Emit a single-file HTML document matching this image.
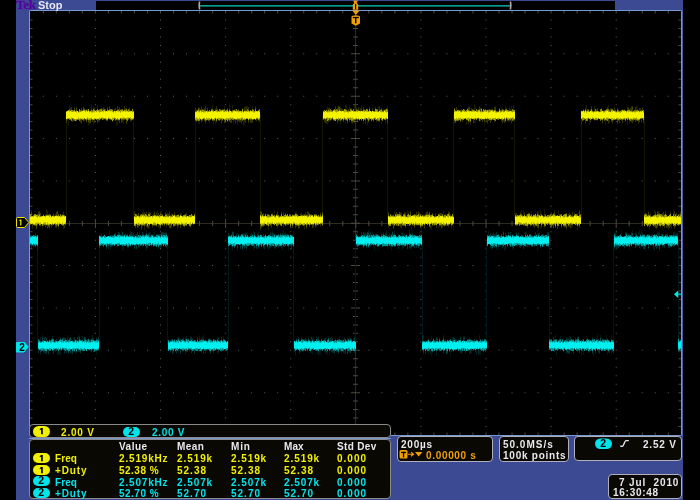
<!DOCTYPE html>
<html><head><meta charset="utf-8"><style>
html,body{margin:0;padding:0;background:#000;width:700px;height:500px;overflow:hidden;}
body{position:relative;font-family:"Liberation Sans",sans-serif;}
.a{position:absolute;}
.t{position:absolute;white-space:pre;line-height:8px;height:8px;font-size:10px;font-weight:bold;will-change:transform;}
.box{position:absolute;box-sizing:border-box;background:#0a0803;border:1px solid #8a8a8a;border-radius:4px;}
.pill{position:absolute;box-sizing:border-box;border-radius:6px;color:#000;font-weight:bold;text-align:center;font-size:10px;}
</style></head><body>
<div class="a" style="left:16px;top:0;width:667px;height:500px;background:#3c4a94"></div>
<div class="a" style="left:96px;top:1px;width:519px;height:9px;background:#000"></div>
<div class="a" style="left:200px;top:5px;width:310px;height:1px;background:#0c9c8e"></div><div class="a" style="left:200px;top:6px;width:310px;height:1px;background:#066a60"></div>
<div class="a" style="left:29px;top:10px;width:653px;height:426px;background:#7898d4;border-radius:2px"></div><div class="a" style="left:682px;top:10px;width:1px;height:426px;background:#4a5ab0"></div>
<svg width="700" height="500" style="position:absolute;left:0;top:0"><defs><filter id="vb" x="-1%" y="-20%" width="102%" height="140%"><feGaussianBlur stdDeviation="0.35 0.7"/></filter></defs><rect x="30" y="11" width="651" height="424" fill="#000"/><path d="M94.90 19.47h1v1h-1zM94.90 27.94h1v1h-1zM94.90 36.41h1v1h-1zM94.90 44.88h1v1h-1zM94.90 53.35h1v1h-1zM94.90 61.82h1v1h-1zM94.90 70.29h1v1h-1zM94.90 78.76h1v1h-1zM94.90 87.23h1v1h-1zM94.90 95.70h1v1h-1zM94.90 104.17h1v1h-1zM94.90 112.64h1v1h-1zM94.90 121.11h1v1h-1zM94.90 129.58h1v1h-1zM94.90 138.05h1v1h-1zM94.90 146.52h1v1h-1zM94.90 154.99h1v1h-1zM94.90 163.46h1v1h-1zM94.90 171.93h1v1h-1zM94.90 180.40h1v1h-1zM94.90 188.87h1v1h-1zM94.90 197.34h1v1h-1zM94.90 205.81h1v1h-1zM94.90 214.28h1v1h-1zM94.90 222.75h1v1h-1zM94.90 231.22h1v1h-1zM94.90 239.69h1v1h-1zM94.90 248.16h1v1h-1zM94.90 256.63h1v1h-1zM94.90 265.10h1v1h-1zM94.90 273.57h1v1h-1zM94.90 282.04h1v1h-1zM94.90 290.51h1v1h-1zM94.90 298.98h1v1h-1zM94.90 307.45h1v1h-1zM94.90 315.92h1v1h-1zM94.90 324.39h1v1h-1zM94.90 332.86h1v1h-1zM94.90 341.33h1v1h-1zM94.90 349.80h1v1h-1zM94.90 358.27h1v1h-1zM94.90 366.74h1v1h-1zM94.90 375.21h1v1h-1zM94.90 383.68h1v1h-1zM94.90 392.15h1v1h-1zM94.90 400.62h1v1h-1zM94.90 409.09h1v1h-1zM94.90 417.56h1v1h-1zM94.90 426.03h1v1h-1zM160.00 19.47h1v1h-1zM160.00 27.94h1v1h-1zM160.00 36.41h1v1h-1zM160.00 44.88h1v1h-1zM160.00 53.35h1v1h-1zM160.00 61.82h1v1h-1zM160.00 70.29h1v1h-1zM160.00 78.76h1v1h-1zM160.00 87.23h1v1h-1zM160.00 95.70h1v1h-1zM160.00 104.17h1v1h-1zM160.00 112.64h1v1h-1zM160.00 121.11h1v1h-1zM160.00 129.58h1v1h-1zM160.00 138.05h1v1h-1zM160.00 146.52h1v1h-1zM160.00 154.99h1v1h-1zM160.00 163.46h1v1h-1zM160.00 171.93h1v1h-1zM160.00 180.40h1v1h-1zM160.00 188.87h1v1h-1zM160.00 197.34h1v1h-1zM160.00 205.81h1v1h-1zM160.00 214.28h1v1h-1zM160.00 222.75h1v1h-1zM160.00 231.22h1v1h-1zM160.00 239.69h1v1h-1zM160.00 248.16h1v1h-1zM160.00 256.63h1v1h-1zM160.00 265.10h1v1h-1zM160.00 273.57h1v1h-1zM160.00 282.04h1v1h-1zM160.00 290.51h1v1h-1zM160.00 298.98h1v1h-1zM160.00 307.45h1v1h-1zM160.00 315.92h1v1h-1zM160.00 324.39h1v1h-1zM160.00 332.86h1v1h-1zM160.00 341.33h1v1h-1zM160.00 349.80h1v1h-1zM160.00 358.27h1v1h-1zM160.00 366.74h1v1h-1zM160.00 375.21h1v1h-1zM160.00 383.68h1v1h-1zM160.00 392.15h1v1h-1zM160.00 400.62h1v1h-1zM160.00 409.09h1v1h-1zM160.00 417.56h1v1h-1zM160.00 426.03h1v1h-1zM225.10 19.47h1v1h-1zM225.10 27.94h1v1h-1zM225.10 36.41h1v1h-1zM225.10 44.88h1v1h-1zM225.10 53.35h1v1h-1zM225.10 61.82h1v1h-1zM225.10 70.29h1v1h-1zM225.10 78.76h1v1h-1zM225.10 87.23h1v1h-1zM225.10 95.70h1v1h-1zM225.10 104.17h1v1h-1zM225.10 112.64h1v1h-1zM225.10 121.11h1v1h-1zM225.10 129.58h1v1h-1zM225.10 138.05h1v1h-1zM225.10 146.52h1v1h-1zM225.10 154.99h1v1h-1zM225.10 163.46h1v1h-1zM225.10 171.93h1v1h-1zM225.10 180.40h1v1h-1zM225.10 188.87h1v1h-1zM225.10 197.34h1v1h-1zM225.10 205.81h1v1h-1zM225.10 214.28h1v1h-1zM225.10 222.75h1v1h-1zM225.10 231.22h1v1h-1zM225.10 239.69h1v1h-1zM225.10 248.16h1v1h-1zM225.10 256.63h1v1h-1zM225.10 265.10h1v1h-1zM225.10 273.57h1v1h-1zM225.10 282.04h1v1h-1zM225.10 290.51h1v1h-1zM225.10 298.98h1v1h-1zM225.10 307.45h1v1h-1zM225.10 315.92h1v1h-1zM225.10 324.39h1v1h-1zM225.10 332.86h1v1h-1zM225.10 341.33h1v1h-1zM225.10 349.80h1v1h-1zM225.10 358.27h1v1h-1zM225.10 366.74h1v1h-1zM225.10 375.21h1v1h-1zM225.10 383.68h1v1h-1zM225.10 392.15h1v1h-1zM225.10 400.62h1v1h-1zM225.10 409.09h1v1h-1zM225.10 417.56h1v1h-1zM225.10 426.03h1v1h-1zM290.20 19.47h1v1h-1zM290.20 27.94h1v1h-1zM290.20 36.41h1v1h-1zM290.20 44.88h1v1h-1zM290.20 53.35h1v1h-1zM290.20 61.82h1v1h-1zM290.20 70.29h1v1h-1zM290.20 78.76h1v1h-1zM290.20 87.23h1v1h-1zM290.20 95.70h1v1h-1zM290.20 104.17h1v1h-1zM290.20 112.64h1v1h-1zM290.20 121.11h1v1h-1zM290.20 129.58h1v1h-1zM290.20 138.05h1v1h-1zM290.20 146.52h1v1h-1zM290.20 154.99h1v1h-1zM290.20 163.46h1v1h-1zM290.20 171.93h1v1h-1zM290.20 180.40h1v1h-1zM290.20 188.87h1v1h-1zM290.20 197.34h1v1h-1zM290.20 205.81h1v1h-1zM290.20 214.28h1v1h-1zM290.20 222.75h1v1h-1zM290.20 231.22h1v1h-1zM290.20 239.69h1v1h-1zM290.20 248.16h1v1h-1zM290.20 256.63h1v1h-1zM290.20 265.10h1v1h-1zM290.20 273.57h1v1h-1zM290.20 282.04h1v1h-1zM290.20 290.51h1v1h-1zM290.20 298.98h1v1h-1zM290.20 307.45h1v1h-1zM290.20 315.92h1v1h-1zM290.20 324.39h1v1h-1zM290.20 332.86h1v1h-1zM290.20 341.33h1v1h-1zM290.20 349.80h1v1h-1zM290.20 358.27h1v1h-1zM290.20 366.74h1v1h-1zM290.20 375.21h1v1h-1zM290.20 383.68h1v1h-1zM290.20 392.15h1v1h-1zM290.20 400.62h1v1h-1zM290.20 409.09h1v1h-1zM290.20 417.56h1v1h-1zM290.20 426.03h1v1h-1zM420.40 19.47h1v1h-1zM420.40 27.94h1v1h-1zM420.40 36.41h1v1h-1zM420.40 44.88h1v1h-1zM420.40 53.35h1v1h-1zM420.40 61.82h1v1h-1zM420.40 70.29h1v1h-1zM420.40 78.76h1v1h-1zM420.40 87.23h1v1h-1zM420.40 95.70h1v1h-1zM420.40 104.17h1v1h-1zM420.40 112.64h1v1h-1zM420.40 121.11h1v1h-1zM420.40 129.58h1v1h-1zM420.40 138.05h1v1h-1zM420.40 146.52h1v1h-1zM420.40 154.99h1v1h-1zM420.40 163.46h1v1h-1zM420.40 171.93h1v1h-1zM420.40 180.40h1v1h-1zM420.40 188.87h1v1h-1zM420.40 197.34h1v1h-1zM420.40 205.81h1v1h-1zM420.40 214.28h1v1h-1zM420.40 222.75h1v1h-1zM420.40 231.22h1v1h-1zM420.40 239.69h1v1h-1zM420.40 248.16h1v1h-1zM420.40 256.63h1v1h-1zM420.40 265.10h1v1h-1zM420.40 273.57h1v1h-1zM420.40 282.04h1v1h-1zM420.40 290.51h1v1h-1zM420.40 298.98h1v1h-1zM420.40 307.45h1v1h-1zM420.40 315.92h1v1h-1zM420.40 324.39h1v1h-1zM420.40 332.86h1v1h-1zM420.40 341.33h1v1h-1zM420.40 349.80h1v1h-1zM420.40 358.27h1v1h-1zM420.40 366.74h1v1h-1zM420.40 375.21h1v1h-1zM420.40 383.68h1v1h-1zM420.40 392.15h1v1h-1zM420.40 400.62h1v1h-1zM420.40 409.09h1v1h-1zM420.40 417.56h1v1h-1zM420.40 426.03h1v1h-1zM485.50 19.47h1v1h-1zM485.50 27.94h1v1h-1zM485.50 36.41h1v1h-1zM485.50 44.88h1v1h-1zM485.50 53.35h1v1h-1zM485.50 61.82h1v1h-1zM485.50 70.29h1v1h-1zM485.50 78.76h1v1h-1zM485.50 87.23h1v1h-1zM485.50 95.70h1v1h-1zM485.50 104.17h1v1h-1zM485.50 112.64h1v1h-1zM485.50 121.11h1v1h-1zM485.50 129.58h1v1h-1zM485.50 138.05h1v1h-1zM485.50 146.52h1v1h-1zM485.50 154.99h1v1h-1zM485.50 163.46h1v1h-1zM485.50 171.93h1v1h-1zM485.50 180.40h1v1h-1zM485.50 188.87h1v1h-1zM485.50 197.34h1v1h-1zM485.50 205.81h1v1h-1zM485.50 214.28h1v1h-1zM485.50 222.75h1v1h-1zM485.50 231.22h1v1h-1zM485.50 239.69h1v1h-1zM485.50 248.16h1v1h-1zM485.50 256.63h1v1h-1zM485.50 265.10h1v1h-1zM485.50 273.57h1v1h-1zM485.50 282.04h1v1h-1zM485.50 290.51h1v1h-1zM485.50 298.98h1v1h-1zM485.50 307.45h1v1h-1zM485.50 315.92h1v1h-1zM485.50 324.39h1v1h-1zM485.50 332.86h1v1h-1zM485.50 341.33h1v1h-1zM485.50 349.80h1v1h-1zM485.50 358.27h1v1h-1zM485.50 366.74h1v1h-1zM485.50 375.21h1v1h-1zM485.50 383.68h1v1h-1zM485.50 392.15h1v1h-1zM485.50 400.62h1v1h-1zM485.50 409.09h1v1h-1zM485.50 417.56h1v1h-1zM485.50 426.03h1v1h-1zM550.60 19.47h1v1h-1zM550.60 27.94h1v1h-1zM550.60 36.41h1v1h-1zM550.60 44.88h1v1h-1zM550.60 53.35h1v1h-1zM550.60 61.82h1v1h-1zM550.60 70.29h1v1h-1zM550.60 78.76h1v1h-1zM550.60 87.23h1v1h-1zM550.60 95.70h1v1h-1zM550.60 104.17h1v1h-1zM550.60 112.64h1v1h-1zM550.60 121.11h1v1h-1zM550.60 129.58h1v1h-1zM550.60 138.05h1v1h-1zM550.60 146.52h1v1h-1zM550.60 154.99h1v1h-1zM550.60 163.46h1v1h-1zM550.60 171.93h1v1h-1zM550.60 180.40h1v1h-1zM550.60 188.87h1v1h-1zM550.60 197.34h1v1h-1zM550.60 205.81h1v1h-1zM550.60 214.28h1v1h-1zM550.60 222.75h1v1h-1zM550.60 231.22h1v1h-1zM550.60 239.69h1v1h-1zM550.60 248.16h1v1h-1zM550.60 256.63h1v1h-1zM550.60 265.10h1v1h-1zM550.60 273.57h1v1h-1zM550.60 282.04h1v1h-1zM550.60 290.51h1v1h-1zM550.60 298.98h1v1h-1zM550.60 307.45h1v1h-1zM550.60 315.92h1v1h-1zM550.60 324.39h1v1h-1zM550.60 332.86h1v1h-1zM550.60 341.33h1v1h-1zM550.60 349.80h1v1h-1zM550.60 358.27h1v1h-1zM550.60 366.74h1v1h-1zM550.60 375.21h1v1h-1zM550.60 383.68h1v1h-1zM550.60 392.15h1v1h-1zM550.60 400.62h1v1h-1zM550.60 409.09h1v1h-1zM550.60 417.56h1v1h-1zM550.60 426.03h1v1h-1zM615.70 19.47h1v1h-1zM615.70 27.94h1v1h-1zM615.70 36.41h1v1h-1zM615.70 44.88h1v1h-1zM615.70 53.35h1v1h-1zM615.70 61.82h1v1h-1zM615.70 70.29h1v1h-1zM615.70 78.76h1v1h-1zM615.70 87.23h1v1h-1zM615.70 95.70h1v1h-1zM615.70 104.17h1v1h-1zM615.70 112.64h1v1h-1zM615.70 121.11h1v1h-1zM615.70 129.58h1v1h-1zM615.70 138.05h1v1h-1zM615.70 146.52h1v1h-1zM615.70 154.99h1v1h-1zM615.70 163.46h1v1h-1zM615.70 171.93h1v1h-1zM615.70 180.40h1v1h-1zM615.70 188.87h1v1h-1zM615.70 197.34h1v1h-1zM615.70 205.81h1v1h-1zM615.70 214.28h1v1h-1zM615.70 222.75h1v1h-1zM615.70 231.22h1v1h-1zM615.70 239.69h1v1h-1zM615.70 248.16h1v1h-1zM615.70 256.63h1v1h-1zM615.70 265.10h1v1h-1zM615.70 273.57h1v1h-1zM615.70 282.04h1v1h-1zM615.70 290.51h1v1h-1zM615.70 298.98h1v1h-1zM615.70 307.45h1v1h-1zM615.70 315.92h1v1h-1zM615.70 324.39h1v1h-1zM615.70 332.86h1v1h-1zM615.70 341.33h1v1h-1zM615.70 349.80h1v1h-1zM615.70 358.27h1v1h-1zM615.70 366.74h1v1h-1zM615.70 375.21h1v1h-1zM615.70 383.68h1v1h-1zM615.70 392.15h1v1h-1zM615.70 400.62h1v1h-1zM615.70 409.09h1v1h-1zM615.70 417.56h1v1h-1zM615.70 426.03h1v1h-1zM42.82 53.35h1v1h-1zM55.84 53.35h1v1h-1zM68.86 53.35h1v1h-1zM81.88 53.35h1v1h-1zM107.92 53.35h1v1h-1zM120.94 53.35h1v1h-1zM133.96 53.35h1v1h-1zM146.98 53.35h1v1h-1zM173.02 53.35h1v1h-1zM186.04 53.35h1v1h-1zM199.06 53.35h1v1h-1zM212.08 53.35h1v1h-1zM238.12 53.35h1v1h-1zM251.14 53.35h1v1h-1zM264.16 53.35h1v1h-1zM277.18 53.35h1v1h-1zM303.22 53.35h1v1h-1zM316.24 53.35h1v1h-1zM329.26 53.35h1v1h-1zM342.28 53.35h1v1h-1zM368.32 53.35h1v1h-1zM381.34 53.35h1v1h-1zM394.36 53.35h1v1h-1zM407.38 53.35h1v1h-1zM433.42 53.35h1v1h-1zM446.44 53.35h1v1h-1zM459.46 53.35h1v1h-1zM472.48 53.35h1v1h-1zM498.52 53.35h1v1h-1zM511.54 53.35h1v1h-1zM524.56 53.35h1v1h-1zM537.58 53.35h1v1h-1zM563.62 53.35h1v1h-1zM576.64 53.35h1v1h-1zM589.66 53.35h1v1h-1zM602.68 53.35h1v1h-1zM628.72 53.35h1v1h-1zM641.74 53.35h1v1h-1zM654.76 53.35h1v1h-1zM667.78 53.35h1v1h-1zM42.82 95.70h1v1h-1zM55.84 95.70h1v1h-1zM68.86 95.70h1v1h-1zM81.88 95.70h1v1h-1zM107.92 95.70h1v1h-1zM120.94 95.70h1v1h-1zM133.96 95.70h1v1h-1zM146.98 95.70h1v1h-1zM173.02 95.70h1v1h-1zM186.04 95.70h1v1h-1zM199.06 95.70h1v1h-1zM212.08 95.70h1v1h-1zM238.12 95.70h1v1h-1zM251.14 95.70h1v1h-1zM264.16 95.70h1v1h-1zM277.18 95.70h1v1h-1zM303.22 95.70h1v1h-1zM316.24 95.70h1v1h-1zM329.26 95.70h1v1h-1zM342.28 95.70h1v1h-1zM368.32 95.70h1v1h-1zM381.34 95.70h1v1h-1zM394.36 95.70h1v1h-1zM407.38 95.70h1v1h-1zM433.42 95.70h1v1h-1zM446.44 95.70h1v1h-1zM459.46 95.70h1v1h-1zM472.48 95.70h1v1h-1zM498.52 95.70h1v1h-1zM511.54 95.70h1v1h-1zM524.56 95.70h1v1h-1zM537.58 95.70h1v1h-1zM563.62 95.70h1v1h-1zM576.64 95.70h1v1h-1zM589.66 95.70h1v1h-1zM602.68 95.70h1v1h-1zM628.72 95.70h1v1h-1zM641.74 95.70h1v1h-1zM654.76 95.70h1v1h-1zM667.78 95.70h1v1h-1zM42.82 138.05h1v1h-1zM55.84 138.05h1v1h-1zM68.86 138.05h1v1h-1zM81.88 138.05h1v1h-1zM107.92 138.05h1v1h-1zM120.94 138.05h1v1h-1zM133.96 138.05h1v1h-1zM146.98 138.05h1v1h-1zM173.02 138.05h1v1h-1zM186.04 138.05h1v1h-1zM199.06 138.05h1v1h-1zM212.08 138.05h1v1h-1zM238.12 138.05h1v1h-1zM251.14 138.05h1v1h-1zM264.16 138.05h1v1h-1zM277.18 138.05h1v1h-1zM303.22 138.05h1v1h-1zM316.24 138.05h1v1h-1zM329.26 138.05h1v1h-1zM342.28 138.05h1v1h-1zM368.32 138.05h1v1h-1zM381.34 138.05h1v1h-1zM394.36 138.05h1v1h-1zM407.38 138.05h1v1h-1zM433.42 138.05h1v1h-1zM446.44 138.05h1v1h-1zM459.46 138.05h1v1h-1zM472.48 138.05h1v1h-1zM498.52 138.05h1v1h-1zM511.54 138.05h1v1h-1zM524.56 138.05h1v1h-1zM537.58 138.05h1v1h-1zM563.62 138.05h1v1h-1zM576.64 138.05h1v1h-1zM589.66 138.05h1v1h-1zM602.68 138.05h1v1h-1zM628.72 138.05h1v1h-1zM641.74 138.05h1v1h-1zM654.76 138.05h1v1h-1zM667.78 138.05h1v1h-1zM42.82 180.40h1v1h-1zM55.84 180.40h1v1h-1zM68.86 180.40h1v1h-1zM81.88 180.40h1v1h-1zM107.92 180.40h1v1h-1zM120.94 180.40h1v1h-1zM133.96 180.40h1v1h-1zM146.98 180.40h1v1h-1zM173.02 180.40h1v1h-1zM186.04 180.40h1v1h-1zM199.06 180.40h1v1h-1zM212.08 180.40h1v1h-1zM238.12 180.40h1v1h-1zM251.14 180.40h1v1h-1zM264.16 180.40h1v1h-1zM277.18 180.40h1v1h-1zM303.22 180.40h1v1h-1zM316.24 180.40h1v1h-1zM329.26 180.40h1v1h-1zM342.28 180.40h1v1h-1zM368.32 180.40h1v1h-1zM381.34 180.40h1v1h-1zM394.36 180.40h1v1h-1zM407.38 180.40h1v1h-1zM433.42 180.40h1v1h-1zM446.44 180.40h1v1h-1zM459.46 180.40h1v1h-1zM472.48 180.40h1v1h-1zM498.52 180.40h1v1h-1zM511.54 180.40h1v1h-1zM524.56 180.40h1v1h-1zM537.58 180.40h1v1h-1zM563.62 180.40h1v1h-1zM576.64 180.40h1v1h-1zM589.66 180.40h1v1h-1zM602.68 180.40h1v1h-1zM628.72 180.40h1v1h-1zM641.74 180.40h1v1h-1zM654.76 180.40h1v1h-1zM667.78 180.40h1v1h-1zM42.82 265.10h1v1h-1zM55.84 265.10h1v1h-1zM68.86 265.10h1v1h-1zM81.88 265.10h1v1h-1zM107.92 265.10h1v1h-1zM120.94 265.10h1v1h-1zM133.96 265.10h1v1h-1zM146.98 265.10h1v1h-1zM173.02 265.10h1v1h-1zM186.04 265.10h1v1h-1zM199.06 265.10h1v1h-1zM212.08 265.10h1v1h-1zM238.12 265.10h1v1h-1zM251.14 265.10h1v1h-1zM264.16 265.10h1v1h-1zM277.18 265.10h1v1h-1zM303.22 265.10h1v1h-1zM316.24 265.10h1v1h-1zM329.26 265.10h1v1h-1zM342.28 265.10h1v1h-1zM368.32 265.10h1v1h-1zM381.34 265.10h1v1h-1zM394.36 265.10h1v1h-1zM407.38 265.10h1v1h-1zM433.42 265.10h1v1h-1zM446.44 265.10h1v1h-1zM459.46 265.10h1v1h-1zM472.48 265.10h1v1h-1zM498.52 265.10h1v1h-1zM511.54 265.10h1v1h-1zM524.56 265.10h1v1h-1zM537.58 265.10h1v1h-1zM563.62 265.10h1v1h-1zM576.64 265.10h1v1h-1zM589.66 265.10h1v1h-1zM602.68 265.10h1v1h-1zM628.72 265.10h1v1h-1zM641.74 265.10h1v1h-1zM654.76 265.10h1v1h-1zM667.78 265.10h1v1h-1zM42.82 307.45h1v1h-1zM55.84 307.45h1v1h-1zM68.86 307.45h1v1h-1zM81.88 307.45h1v1h-1zM107.92 307.45h1v1h-1zM120.94 307.45h1v1h-1zM133.96 307.45h1v1h-1zM146.98 307.45h1v1h-1zM173.02 307.45h1v1h-1zM186.04 307.45h1v1h-1zM199.06 307.45h1v1h-1zM212.08 307.45h1v1h-1zM238.12 307.45h1v1h-1zM251.14 307.45h1v1h-1zM264.16 307.45h1v1h-1zM277.18 307.45h1v1h-1zM303.22 307.45h1v1h-1zM316.24 307.45h1v1h-1zM329.26 307.45h1v1h-1zM342.28 307.45h1v1h-1zM368.32 307.45h1v1h-1zM381.34 307.45h1v1h-1zM394.36 307.45h1v1h-1zM407.38 307.45h1v1h-1zM433.42 307.45h1v1h-1zM446.44 307.45h1v1h-1zM459.46 307.45h1v1h-1zM472.48 307.45h1v1h-1zM498.52 307.45h1v1h-1zM511.54 307.45h1v1h-1zM524.56 307.45h1v1h-1zM537.58 307.45h1v1h-1zM563.62 307.45h1v1h-1zM576.64 307.45h1v1h-1zM589.66 307.45h1v1h-1zM602.68 307.45h1v1h-1zM628.72 307.45h1v1h-1zM641.74 307.45h1v1h-1zM654.76 307.45h1v1h-1zM667.78 307.45h1v1h-1zM42.82 349.80h1v1h-1zM55.84 349.80h1v1h-1zM68.86 349.80h1v1h-1zM81.88 349.80h1v1h-1zM107.92 349.80h1v1h-1zM120.94 349.80h1v1h-1zM133.96 349.80h1v1h-1zM146.98 349.80h1v1h-1zM173.02 349.80h1v1h-1zM186.04 349.80h1v1h-1zM199.06 349.80h1v1h-1zM212.08 349.80h1v1h-1zM238.12 349.80h1v1h-1zM251.14 349.80h1v1h-1zM264.16 349.80h1v1h-1zM277.18 349.80h1v1h-1zM303.22 349.80h1v1h-1zM316.24 349.80h1v1h-1zM329.26 349.80h1v1h-1zM342.28 349.80h1v1h-1zM368.32 349.80h1v1h-1zM381.34 349.80h1v1h-1zM394.36 349.80h1v1h-1zM407.38 349.80h1v1h-1zM433.42 349.80h1v1h-1zM446.44 349.80h1v1h-1zM459.46 349.80h1v1h-1zM472.48 349.80h1v1h-1zM498.52 349.80h1v1h-1zM511.54 349.80h1v1h-1zM524.56 349.80h1v1h-1zM537.58 349.80h1v1h-1zM563.62 349.80h1v1h-1zM576.64 349.80h1v1h-1zM589.66 349.80h1v1h-1zM602.68 349.80h1v1h-1zM628.72 349.80h1v1h-1zM641.74 349.80h1v1h-1zM654.76 349.80h1v1h-1zM667.78 349.80h1v1h-1zM42.82 392.15h1v1h-1zM55.84 392.15h1v1h-1zM68.86 392.15h1v1h-1zM81.88 392.15h1v1h-1zM107.92 392.15h1v1h-1zM120.94 392.15h1v1h-1zM133.96 392.15h1v1h-1zM146.98 392.15h1v1h-1zM173.02 392.15h1v1h-1zM186.04 392.15h1v1h-1zM199.06 392.15h1v1h-1zM212.08 392.15h1v1h-1zM238.12 392.15h1v1h-1zM251.14 392.15h1v1h-1zM264.16 392.15h1v1h-1zM277.18 392.15h1v1h-1zM303.22 392.15h1v1h-1zM316.24 392.15h1v1h-1zM329.26 392.15h1v1h-1zM342.28 392.15h1v1h-1zM368.32 392.15h1v1h-1zM381.34 392.15h1v1h-1zM394.36 392.15h1v1h-1zM407.38 392.15h1v1h-1zM433.42 392.15h1v1h-1zM446.44 392.15h1v1h-1zM459.46 392.15h1v1h-1zM472.48 392.15h1v1h-1zM498.52 392.15h1v1h-1zM511.54 392.15h1v1h-1zM524.56 392.15h1v1h-1zM537.58 392.15h1v1h-1zM563.62 392.15h1v1h-1zM576.64 392.15h1v1h-1zM589.66 392.15h1v1h-1zM602.68 392.15h1v1h-1zM628.72 392.15h1v1h-1zM641.74 392.15h1v1h-1zM654.76 392.15h1v1h-1zM667.78 392.15h1v1h-1z" fill="#5e5a4c"/><path d="M42.82 11h1v2.5h-1zM42.82 432.5h1v2.5h-1zM55.84 11h1v2.5h-1zM55.84 432.5h1v2.5h-1zM68.86 11h1v2.5h-1zM68.86 432.5h1v2.5h-1zM81.88 11h1v2.5h-1zM81.88 432.5h1v2.5h-1zM94.90 11h1v2.5h-1zM94.90 432.5h1v2.5h-1zM107.92 11h1v2.5h-1zM107.92 432.5h1v2.5h-1zM120.94 11h1v2.5h-1zM120.94 432.5h1v2.5h-1zM133.96 11h1v2.5h-1zM133.96 432.5h1v2.5h-1zM146.98 11h1v2.5h-1zM146.98 432.5h1v2.5h-1zM160.00 11h1v2.5h-1zM160.00 432.5h1v2.5h-1zM173.02 11h1v2.5h-1zM173.02 432.5h1v2.5h-1zM186.04 11h1v2.5h-1zM186.04 432.5h1v2.5h-1zM199.06 11h1v2.5h-1zM199.06 432.5h1v2.5h-1zM212.08 11h1v2.5h-1zM212.08 432.5h1v2.5h-1zM225.10 11h1v2.5h-1zM225.10 432.5h1v2.5h-1zM238.12 11h1v2.5h-1zM238.12 432.5h1v2.5h-1zM251.14 11h1v2.5h-1zM251.14 432.5h1v2.5h-1zM264.16 11h1v2.5h-1zM264.16 432.5h1v2.5h-1zM277.18 11h1v2.5h-1zM277.18 432.5h1v2.5h-1zM290.20 11h1v2.5h-1zM290.20 432.5h1v2.5h-1zM303.22 11h1v2.5h-1zM303.22 432.5h1v2.5h-1zM316.24 11h1v2.5h-1zM316.24 432.5h1v2.5h-1zM329.26 11h1v2.5h-1zM329.26 432.5h1v2.5h-1zM342.28 11h1v2.5h-1zM342.28 432.5h1v2.5h-1zM355.30 11h1v2.5h-1zM355.30 432.5h1v2.5h-1zM368.32 11h1v2.5h-1zM368.32 432.5h1v2.5h-1zM381.34 11h1v2.5h-1zM381.34 432.5h1v2.5h-1zM394.36 11h1v2.5h-1zM394.36 432.5h1v2.5h-1zM407.38 11h1v2.5h-1zM407.38 432.5h1v2.5h-1zM420.40 11h1v2.5h-1zM420.40 432.5h1v2.5h-1zM433.42 11h1v2.5h-1zM433.42 432.5h1v2.5h-1zM446.44 11h1v2.5h-1zM446.44 432.5h1v2.5h-1zM459.46 11h1v2.5h-1zM459.46 432.5h1v2.5h-1zM472.48 11h1v2.5h-1zM472.48 432.5h1v2.5h-1zM485.50 11h1v2.5h-1zM485.50 432.5h1v2.5h-1zM498.52 11h1v2.5h-1zM498.52 432.5h1v2.5h-1zM511.54 11h1v2.5h-1zM511.54 432.5h1v2.5h-1zM524.56 11h1v2.5h-1zM524.56 432.5h1v2.5h-1zM537.58 11h1v2.5h-1zM537.58 432.5h1v2.5h-1zM550.60 11h1v2.5h-1zM550.60 432.5h1v2.5h-1zM563.62 11h1v2.5h-1zM563.62 432.5h1v2.5h-1zM576.64 11h1v2.5h-1zM576.64 432.5h1v2.5h-1zM589.66 11h1v2.5h-1zM589.66 432.5h1v2.5h-1zM602.68 11h1v2.5h-1zM602.68 432.5h1v2.5h-1zM615.70 11h1v2.5h-1zM615.70 432.5h1v2.5h-1zM628.72 11h1v2.5h-1zM628.72 432.5h1v2.5h-1zM641.74 11h1v2.5h-1zM641.74 432.5h1v2.5h-1zM654.76 11h1v2.5h-1zM654.76 432.5h1v2.5h-1zM667.78 11h1v2.5h-1zM667.78 432.5h1v2.5h-1zM30 19.47h2.5v1h-2.5zM678.5 19.47h2.5v1h-2.5zM30 27.94h2.5v1h-2.5zM678.5 27.94h2.5v1h-2.5zM30 36.41h2.5v1h-2.5zM678.5 36.41h2.5v1h-2.5zM30 44.88h2.5v1h-2.5zM678.5 44.88h2.5v1h-2.5zM30 53.35h2.5v1h-2.5zM678.5 53.35h2.5v1h-2.5zM30 61.82h2.5v1h-2.5zM678.5 61.82h2.5v1h-2.5zM30 70.29h2.5v1h-2.5zM678.5 70.29h2.5v1h-2.5zM30 78.76h2.5v1h-2.5zM678.5 78.76h2.5v1h-2.5zM30 87.23h2.5v1h-2.5zM678.5 87.23h2.5v1h-2.5zM30 95.70h2.5v1h-2.5zM678.5 95.70h2.5v1h-2.5zM30 104.17h2.5v1h-2.5zM678.5 104.17h2.5v1h-2.5zM30 112.64h2.5v1h-2.5zM678.5 112.64h2.5v1h-2.5zM30 121.11h2.5v1h-2.5zM678.5 121.11h2.5v1h-2.5zM30 129.58h2.5v1h-2.5zM678.5 129.58h2.5v1h-2.5zM30 138.05h2.5v1h-2.5zM678.5 138.05h2.5v1h-2.5zM30 146.52h2.5v1h-2.5zM678.5 146.52h2.5v1h-2.5zM30 154.99h2.5v1h-2.5zM678.5 154.99h2.5v1h-2.5zM30 163.46h2.5v1h-2.5zM678.5 163.46h2.5v1h-2.5zM30 171.93h2.5v1h-2.5zM678.5 171.93h2.5v1h-2.5zM30 180.40h2.5v1h-2.5zM678.5 180.40h2.5v1h-2.5zM30 188.87h2.5v1h-2.5zM678.5 188.87h2.5v1h-2.5zM30 197.34h2.5v1h-2.5zM678.5 197.34h2.5v1h-2.5zM30 205.81h2.5v1h-2.5zM678.5 205.81h2.5v1h-2.5zM30 214.28h2.5v1h-2.5zM678.5 214.28h2.5v1h-2.5zM30 222.75h2.5v1h-2.5zM678.5 222.75h2.5v1h-2.5zM30 231.22h2.5v1h-2.5zM678.5 231.22h2.5v1h-2.5zM30 239.69h2.5v1h-2.5zM678.5 239.69h2.5v1h-2.5zM30 248.16h2.5v1h-2.5zM678.5 248.16h2.5v1h-2.5zM30 256.63h2.5v1h-2.5zM678.5 256.63h2.5v1h-2.5zM30 265.10h2.5v1h-2.5zM678.5 265.10h2.5v1h-2.5zM30 273.57h2.5v1h-2.5zM678.5 273.57h2.5v1h-2.5zM30 282.04h2.5v1h-2.5zM678.5 282.04h2.5v1h-2.5zM30 290.51h2.5v1h-2.5zM678.5 290.51h2.5v1h-2.5zM30 298.98h2.5v1h-2.5zM678.5 298.98h2.5v1h-2.5zM30 307.45h2.5v1h-2.5zM678.5 307.45h2.5v1h-2.5zM30 315.92h2.5v1h-2.5zM678.5 315.92h2.5v1h-2.5zM30 324.39h2.5v1h-2.5zM678.5 324.39h2.5v1h-2.5zM30 332.86h2.5v1h-2.5zM678.5 332.86h2.5v1h-2.5zM30 341.33h2.5v1h-2.5zM678.5 341.33h2.5v1h-2.5zM30 349.80h2.5v1h-2.5zM678.5 349.80h2.5v1h-2.5zM30 358.27h2.5v1h-2.5zM678.5 358.27h2.5v1h-2.5zM30 366.74h2.5v1h-2.5zM678.5 366.74h2.5v1h-2.5zM30 375.21h2.5v1h-2.5zM678.5 375.21h2.5v1h-2.5zM30 383.68h2.5v1h-2.5zM678.5 383.68h2.5v1h-2.5zM30 392.15h2.5v1h-2.5zM678.5 392.15h2.5v1h-2.5zM30 400.62h2.5v1h-2.5zM678.5 400.62h2.5v1h-2.5zM30 409.09h2.5v1h-2.5zM678.5 409.09h2.5v1h-2.5zM30 417.56h2.5v1h-2.5zM678.5 417.56h2.5v1h-2.5zM30 426.03h2.5v1h-2.5zM678.5 426.03h2.5v1h-2.5z" fill="#4c483e"/><rect x="355" y="11" width="1" height="424" fill="#2e2b22"/><rect x="30" y="223" width="651" height="1" fill="#2e2b22"/><path d="M353.00 19.47h5v1h-5zM42.82 221.00h1v5h-1zM353.00 27.94h5v1h-5zM55.84 221.00h1v5h-1zM353.00 36.41h5v1h-5zM68.86 221.00h1v5h-1zM353.00 44.88h5v1h-5zM81.88 221.00h1v5h-1zM351.00 53.35h9v1h-9zM94.90 219.00h1v9h-1zM353.00 61.82h5v1h-5zM107.92 221.00h1v5h-1zM353.00 70.29h5v1h-5zM120.94 221.00h1v5h-1zM353.00 78.76h5v1h-5zM133.96 221.00h1v5h-1zM353.00 87.23h5v1h-5zM146.98 221.00h1v5h-1zM351.00 95.70h9v1h-9zM160.00 219.00h1v9h-1zM353.00 104.17h5v1h-5zM173.02 221.00h1v5h-1zM353.00 112.64h5v1h-5zM186.04 221.00h1v5h-1zM353.00 121.11h5v1h-5zM199.06 221.00h1v5h-1zM353.00 129.58h5v1h-5zM212.08 221.00h1v5h-1zM351.00 138.05h9v1h-9zM225.10 219.00h1v9h-1zM353.00 146.52h5v1h-5zM238.12 221.00h1v5h-1zM353.00 154.99h5v1h-5zM251.14 221.00h1v5h-1zM353.00 163.46h5v1h-5zM264.16 221.00h1v5h-1zM353.00 171.93h5v1h-5zM277.18 221.00h1v5h-1zM351.00 180.40h9v1h-9zM290.20 219.00h1v9h-1zM353.00 188.87h5v1h-5zM303.22 221.00h1v5h-1zM353.00 197.34h5v1h-5zM316.24 221.00h1v5h-1zM353.00 205.81h5v1h-5zM329.26 221.00h1v5h-1zM353.00 214.28h5v1h-5zM342.28 221.00h1v5h-1zM351.00 222.75h9v1h-9zM355.30 219.00h1v9h-1zM353.00 231.22h5v1h-5zM368.32 221.00h1v5h-1zM353.00 239.69h5v1h-5zM381.34 221.00h1v5h-1zM353.00 248.16h5v1h-5zM394.36 221.00h1v5h-1zM353.00 256.63h5v1h-5zM407.38 221.00h1v5h-1zM351.00 265.10h9v1h-9zM420.40 219.00h1v9h-1zM353.00 273.57h5v1h-5zM433.42 221.00h1v5h-1zM353.00 282.04h5v1h-5zM446.44 221.00h1v5h-1zM353.00 290.51h5v1h-5zM459.46 221.00h1v5h-1zM353.00 298.98h5v1h-5zM472.48 221.00h1v5h-1zM351.00 307.45h9v1h-9zM485.50 219.00h1v9h-1zM353.00 315.92h5v1h-5zM498.52 221.00h1v5h-1zM353.00 324.39h5v1h-5zM511.54 221.00h1v5h-1zM353.00 332.86h5v1h-5zM524.56 221.00h1v5h-1zM353.00 341.33h5v1h-5zM537.58 221.00h1v5h-1zM351.00 349.80h9v1h-9zM550.60 219.00h1v9h-1zM353.00 358.27h5v1h-5zM563.62 221.00h1v5h-1zM353.00 366.74h5v1h-5zM576.64 221.00h1v5h-1zM353.00 375.21h5v1h-5zM589.66 221.00h1v5h-1zM353.00 383.68h5v1h-5zM602.68 221.00h1v5h-1zM351.00 392.15h9v1h-9zM615.70 219.00h1v9h-1zM353.00 400.62h5v1h-5zM628.72 221.00h1v5h-1zM353.00 409.09h5v1h-5zM641.74 221.00h1v5h-1zM353.00 417.56h5v1h-5zM654.76 221.00h1v5h-1zM353.00 426.03h5v1h-5zM667.78 221.00h1v5h-1z" fill="#4e4a3e"/><path d="M66.5 115.0V220.0M133.5 115.0V220.0M195.5 115.0V220.0M260.5 115.0V220.0M322.5 115.0V220.0M387.5 115.0V220.0M453.5 115.0V220.0M514.5 115.0V220.0M581.5 115.0V220.0M644.5 115.0V220.0" stroke="#161600" stroke-width="1" fill="none"/><g filter="url(#vb)"><path d="M31.5 209.3V214.8M32.5 225.2V229.4M36.5 225.2V228.8M42.5 225.2V228.3M46.5 209.5V214.8M47.5 210.4V214.8M49.5 225.2V229.8M57.5 210.2V214.8M58.5 225.2V229.4M63.5 225.2V229.3M68.5 120.2V125.6M69.5 105.5V109.8M76.5 106.3V109.8M88.5 120.2V125.5M90.5 120.2V123.8M91.5 104.3V109.8M93.5 120.2V124.5M97.5 105.4V109.8M97.5 120.2V123.4M107.5 106.6V109.8M116.5 120.2V125.6M117.5 120.2V124.4M123.5 120.2V124.1M126.5 106.4V109.8M126.5 120.2V124.9M137.5 225.2V228.7M141.5 225.2V230.0M143.5 209.5V214.8M144.5 225.2V230.2M148.5 211.5V214.8M149.5 225.2V228.8M157.5 210.3V214.8M159.5 225.2V229.0M161.5 210.6V214.8M170.5 225.2V229.2M177.5 225.2V229.2M198.5 120.2V123.6M199.5 120.2V124.5M212.5 104.6V109.8M213.5 120.2V124.6M215.5 120.2V123.7M224.5 105.9V109.8M229.5 104.7V109.8M232.5 104.7V109.8M233.5 120.2V123.6M237.5 120.2V125.3M243.5 120.2V125.5M244.5 120.2V125.2M245.5 106.5V109.8M247.5 105.7V109.8M252.5 106.0V109.8M260.5 225.2V230.5M261.5 211.7V214.8M268.5 225.2V230.1M274.5 210.6V214.8M277.5 225.2V229.0M296.5 211.4V214.8M304.5 225.2V229.4M306.5 225.2V229.4M327.5 106.5V109.8M327.5 120.2V124.9M337.5 120.2V123.8M338.5 105.2V109.8M339.5 106.4V109.8M340.5 120.2V124.6M345.5 104.6V109.8M345.5 120.2V123.7M346.5 104.7V109.8M349.5 105.3V109.8M354.5 105.2V109.8M356.5 106.8V109.8M361.5 105.5V109.8M363.5 120.2V124.4M367.5 120.2V125.4M378.5 106.4V109.8M381.5 120.2V124.3M385.5 120.2V123.6M387.5 106.1V109.8M388.5 211.5V214.8M393.5 225.2V229.0M394.5 211.8V214.8M399.5 211.7V214.8M407.5 210.6V214.8M408.5 211.0V214.8M410.5 211.3V214.8M411.5 225.2V230.6M429.5 211.6V214.8M431.5 225.2V230.0M438.5 225.2V229.1M441.5 225.2V228.5M443.5 210.2V214.8M448.5 210.8V214.8M451.5 225.2V228.7M453.5 225.2V229.6M455.5 120.2V123.3M466.5 120.2V124.9M470.5 120.2V124.8M474.5 104.3V109.8M474.5 120.2V123.3M475.5 106.4V109.8M475.5 120.2V123.3M484.5 120.2V124.4M501.5 106.7V109.8M505.5 105.9V109.8M509.5 106.7V109.8M511.5 105.7V109.8M513.5 104.9V109.8M521.5 210.2V214.8M523.5 209.9V214.8M531.5 211.1V214.8M538.5 211.6V214.8M538.5 225.2V230.2M540.5 209.9V214.8M540.5 225.2V228.5M544.5 209.5V214.8M553.5 225.2V228.7M554.5 210.3V214.8M558.5 210.2V214.8M561.5 225.2V228.4M566.5 225.2V229.8M571.5 225.2V228.3M577.5 225.2V230.6M579.5 209.5V214.8M581.5 120.2V124.6M586.5 105.1V109.8M589.5 120.2V124.5M594.5 105.9V109.8M605.5 120.2V125.0M608.5 105.0V109.8M609.5 120.2V123.6M617.5 120.2V124.4M627.5 120.2V125.5M629.5 120.2V123.4M632.5 106.2V109.8M636.5 105.7V109.8M649.5 225.2V229.1M654.5 210.0V214.8M656.5 225.2V229.2M662.5 225.2V229.3M668.5 225.2V230.4M671.5 225.2V229.1M673.5 209.4V214.8M674.5 225.2V228.9" stroke="#f4f400" stroke-width="1" fill="none" opacity="0.11"/><path d="M31.5 212.0V220.0M32.5 220.0V225.9M34.5 214.0V220.0M34.5 220.0V225.4M35.5 214.1V220.0M36.5 214.5V220.0M36.5 220.0V228.6M37.5 220.0V225.9M38.5 211.4V220.0M39.5 211.3V220.0M39.5 220.0V226.1M40.5 212.7V220.0M40.5 220.0V226.8M45.5 214.2V220.0M45.5 220.0V227.2M46.5 220.0V225.3M47.5 220.0V228.7M48.5 220.0V227.6M49.5 220.0V227.2M51.5 220.0V227.6M52.5 220.0V225.8M53.5 213.3V220.0M55.5 214.1V220.0M55.5 220.0V227.4M56.5 211.7V220.0M56.5 220.0V227.7M57.5 211.9V220.0M57.5 220.0V225.7M58.5 220.0V226.9M63.5 211.6V220.0M64.5 220.0V228.0M66.5 115.0V122.8M70.5 108.3V115.0M71.5 107.1V115.0M71.5 115.0V120.9M72.5 115.0V122.0M73.5 115.0V120.9M74.5 107.2V115.0M75.5 115.0V121.0M76.5 108.4V115.0M79.5 109.6V115.0M80.5 115.0V122.7M81.5 108.0V115.0M81.5 115.0V123.3M83.5 106.7V115.0M84.5 108.2V115.0M84.5 115.0V121.4M86.5 115.0V122.4M87.5 108.9V115.0M88.5 115.0V122.3M89.5 115.0V123.5M90.5 115.0V122.7M92.5 115.0V122.0M93.5 107.6V115.0M94.5 107.8V115.0M94.5 115.0V122.9M97.5 108.9V115.0M97.5 115.0V122.4M98.5 115.0V121.4M99.5 115.0V121.7M101.5 107.8V115.0M102.5 108.7V115.0M103.5 107.3V115.0M104.5 108.4V115.0M105.5 109.1V115.0M106.5 115.0V120.3M107.5 107.9V115.0M109.5 106.4V115.0M112.5 109.2V115.0M112.5 115.0V121.7M113.5 115.0V120.4M114.5 109.0V115.0M115.5 107.9V115.0M117.5 106.3V115.0M118.5 109.3V115.0M118.5 115.0V121.1M119.5 107.1V115.0M119.5 115.0V123.1M121.5 115.0V123.1M122.5 109.5V115.0M122.5 115.0V121.8M124.5 106.3V115.0M125.5 108.4V115.0M126.5 115.0V123.1M127.5 115.0V121.0M129.5 107.4V115.0M130.5 115.0V121.5M134.5 211.6V220.0M135.5 220.0V228.1M136.5 220.0V225.3M137.5 220.0V227.3M138.5 213.0V220.0M138.5 220.0V227.2M141.5 220.0V228.4M142.5 212.7V220.0M142.5 220.0V225.6M143.5 213.7V220.0M143.5 220.0V226.0M144.5 212.2V220.0M145.5 213.8V220.0M145.5 220.0V225.4M146.5 211.7V220.0M146.5 220.0V226.9M147.5 220.0V228.1M148.5 220.0V228.3M149.5 212.4V220.0M150.5 212.5V220.0M152.5 220.0V227.3M153.5 213.8V220.0M154.5 211.5V220.0M156.5 212.7V220.0M156.5 220.0V226.7M158.5 213.1V220.0M158.5 220.0V226.7M159.5 220.0V225.7M160.5 211.9V220.0M160.5 220.0V226.1M161.5 214.0V220.0M162.5 214.0V220.0M164.5 220.0V226.4M165.5 212.4V220.0M166.5 220.0V226.4M167.5 213.2V220.0M168.5 213.8V220.0M168.5 220.0V225.8M169.5 211.5V220.0M169.5 220.0V227.9M170.5 220.0V227.9M171.5 213.7V220.0M171.5 220.0V227.1M172.5 213.8V220.0M173.5 214.7V220.0M173.5 220.0V227.4M174.5 212.4V220.0M175.5 214.6V220.0M175.5 220.0V226.3M176.5 220.0V225.5M177.5 220.0V226.6M178.5 213.9V220.0M178.5 220.0V226.4M180.5 213.3V220.0M180.5 220.0V228.1M181.5 213.5V220.0M182.5 220.0V226.0M183.5 220.0V226.4M184.5 220.0V227.4M185.5 213.9V220.0M185.5 220.0V225.8M186.5 213.2V220.0M189.5 220.0V226.5M190.5 220.0V227.6M191.5 220.0V225.3M194.5 214.4V220.0M195.5 107.6V115.0M195.5 115.0V121.0M196.5 109.5V115.0M196.5 115.0V121.9M197.5 109.6V115.0M198.5 106.9V115.0M199.5 108.0V115.0M199.5 115.0V120.9M201.5 106.6V115.0M201.5 115.0V122.2M202.5 115.0V121.2M204.5 108.0V115.0M204.5 115.0V121.3M205.5 106.3V115.0M205.5 115.0V123.6M206.5 115.0V120.8M207.5 107.6V115.0M209.5 115.0V122.4M213.5 115.0V121.2M215.5 108.6V115.0M216.5 106.3V115.0M216.5 115.0V122.4M217.5 108.7V115.0M218.5 115.0V120.6M219.5 115.0V121.3M221.5 115.0V123.2M222.5 109.6V115.0M222.5 115.0V121.2M223.5 109.3V115.0M224.5 115.0V123.3M225.5 115.0V122.4M227.5 108.2V115.0M227.5 115.0V122.5M228.5 115.0V120.8M229.5 115.0V121.8M230.5 115.0V123.0M231.5 115.0V122.9M234.5 115.0V120.6M235.5 108.9V115.0M235.5 115.0V123.4M237.5 115.0V121.7M238.5 109.5V115.0M238.5 115.0V121.3M239.5 115.0V122.3M240.5 115.0V121.9M241.5 115.0V123.2M242.5 108.7V115.0M244.5 107.4V115.0M245.5 109.4V115.0M245.5 115.0V122.8M246.5 106.5V115.0M248.5 107.1V115.0M248.5 115.0V122.8M250.5 115.0V122.6M251.5 115.0V122.7M252.5 115.0V122.8M253.5 109.3V115.0M255.5 106.5V115.0M256.5 115.0V121.2M259.5 115.0V121.8M260.5 211.5V220.0M260.5 220.0V228.5M261.5 211.7V220.0M261.5 220.0V227.5M262.5 220.0V227.0M263.5 213.1V220.0M263.5 220.0V226.9M266.5 220.0V225.6M268.5 220.0V226.4M270.5 220.0V226.0M271.5 213.7V220.0M271.5 220.0V227.7M272.5 213.3V220.0M276.5 214.3V220.0M277.5 211.5V220.0M277.5 220.0V225.8M281.5 212.1V220.0M281.5 220.0V225.4M283.5 212.6V220.0M283.5 220.0V226.9M285.5 213.0V220.0M286.5 220.0V225.5M287.5 214.8V220.0M292.5 220.0V228.1M295.5 212.3V220.0M295.5 220.0V228.2M296.5 220.0V226.4M297.5 220.0V226.2M298.5 220.0V228.5M299.5 220.0V228.2M300.5 213.7V220.0M300.5 220.0V225.4M301.5 213.1V220.0M303.5 214.3V220.0M305.5 212.4V220.0M305.5 220.0V225.6M306.5 220.0V227.7M307.5 211.5V220.0M308.5 211.8V220.0M309.5 213.5V220.0M309.5 220.0V226.8M312.5 220.0V227.9M313.5 220.0V227.3M315.5 220.0V227.7M320.5 212.5V220.0M320.5 220.0V226.3M322.5 212.3V220.0M324.5 115.0V121.7M325.5 115.0V123.3M326.5 115.0V123.1M328.5 108.2V115.0M328.5 115.0V122.2M329.5 107.7V115.0M329.5 115.0V120.6M334.5 108.9V115.0M335.5 106.3V115.0M335.5 115.0V120.7M337.5 107.9V115.0M337.5 115.0V122.2M338.5 106.4V115.0M339.5 107.0V115.0M339.5 115.0V120.9M340.5 107.6V115.0M341.5 108.1V115.0M342.5 108.8V115.0M343.5 115.0V121.9M344.5 109.3V115.0M345.5 109.1V115.0M347.5 109.5V115.0M347.5 115.0V123.2M348.5 109.1V115.0M349.5 115.0V121.9M350.5 107.9V115.0M351.5 108.8V115.0M351.5 115.0V122.8M352.5 115.0V123.6M354.5 115.0V122.9M356.5 115.0V120.2M357.5 115.0V121.9M358.5 107.2V115.0M359.5 109.7V115.0M359.5 115.0V120.8M360.5 108.2V115.0M361.5 109.0V115.0M361.5 115.0V120.8M363.5 107.1V115.0M364.5 109.3V115.0M365.5 115.0V123.4M366.5 109.5V115.0M367.5 108.5V115.0M368.5 115.0V122.6M369.5 107.1V115.0M369.5 115.0V120.3M372.5 107.9V115.0M373.5 115.0V121.7M375.5 107.3V115.0M376.5 115.0V121.6M378.5 115.0V121.5M379.5 106.7V115.0M379.5 115.0V121.9M381.5 108.2V115.0M383.5 109.3V115.0M386.5 108.2V115.0M387.5 115.0V123.3M388.5 213.2V220.0M388.5 220.0V227.6M389.5 220.0V225.8M390.5 214.4V220.0M390.5 220.0V226.0M393.5 214.5V220.0M393.5 220.0V228.5M394.5 220.0V225.8M395.5 213.7V220.0M396.5 212.0V220.0M397.5 220.0V226.3M398.5 220.0V226.2M399.5 212.2V220.0M399.5 220.0V226.0M400.5 212.4V220.0M400.5 220.0V226.9M401.5 213.1V220.0M401.5 220.0V228.3M404.5 212.2V220.0M405.5 212.8V220.0M405.5 220.0V227.8M408.5 213.8V220.0M410.5 211.3V220.0M410.5 220.0V225.3M413.5 220.0V226.0M414.5 220.0V227.8M416.5 211.6V220.0M417.5 214.8V220.0M417.5 220.0V226.1M418.5 211.8V220.0M419.5 212.4V220.0M420.5 220.0V227.4M422.5 214.8V220.0M422.5 220.0V226.4M423.5 214.4V220.0M424.5 214.8V220.0M424.5 220.0V228.3M425.5 213.8V220.0M426.5 212.2V220.0M427.5 211.4V220.0M428.5 213.7V220.0M429.5 211.9V220.0M429.5 220.0V227.2M430.5 220.0V228.3M432.5 213.0V220.0M432.5 220.0V226.2M435.5 213.5V220.0M436.5 220.0V227.7M438.5 214.7V220.0M439.5 212.9V220.0M439.5 220.0V226.7M440.5 212.9V220.0M441.5 212.9V220.0M441.5 220.0V227.6M442.5 220.0V227.7M444.5 220.0V226.3M448.5 212.8V220.0M448.5 220.0V226.8M449.5 212.0V220.0M450.5 214.3V220.0M452.5 214.6V220.0M454.5 107.7V115.0M454.5 115.0V122.9M455.5 115.0V122.5M456.5 107.2V115.0M456.5 115.0V121.5M458.5 115.0V120.3M460.5 115.0V122.2M461.5 109.1V115.0M461.5 115.0V120.5M462.5 115.0V121.8M467.5 108.0V115.0M467.5 115.0V120.8M468.5 106.8V115.0M468.5 115.0V123.6M469.5 106.8V115.0M469.5 115.0V122.1M470.5 115.0V122.1M471.5 108.3V115.0M473.5 115.0V123.2M478.5 109.1V115.0M479.5 106.3V115.0M480.5 107.9V115.0M480.5 115.0V121.1M481.5 107.9V115.0M482.5 115.0V122.2M484.5 115.0V121.6M485.5 108.9V115.0M486.5 115.0V121.2M487.5 109.4V115.0M487.5 115.0V123.4M488.5 115.0V121.0M489.5 115.0V120.4M490.5 115.0V123.1M491.5 115.0V120.6M492.5 108.7V115.0M494.5 106.9V115.0M494.5 115.0V122.1M495.5 106.6V115.0M499.5 107.9V115.0M501.5 115.0V121.1M502.5 115.0V123.3M503.5 115.0V121.5M504.5 115.0V122.7M505.5 115.0V122.3M506.5 108.1V115.0M507.5 115.0V121.2M508.5 115.0V121.4M509.5 108.7V115.0M509.5 115.0V121.2M510.5 109.3V115.0M511.5 115.0V123.1M513.5 115.0V121.2M514.5 109.8V115.0M514.5 115.0V120.3M515.5 213.3V220.0M516.5 213.0V220.0M516.5 220.0V226.0M520.5 212.6V220.0M521.5 213.9V220.0M521.5 220.0V225.8M524.5 212.2V220.0M524.5 220.0V225.3M526.5 214.2V220.0M527.5 220.0V227.8M528.5 212.6V220.0M529.5 212.7V220.0M530.5 214.0V220.0M530.5 220.0V226.5M532.5 220.0V225.3M533.5 214.0V220.0M533.5 220.0V226.9M534.5 220.0V227.3M535.5 213.9V220.0M537.5 211.4V220.0M537.5 220.0V227.9M538.5 220.0V227.6M540.5 213.8V220.0M541.5 213.6V220.0M541.5 220.0V227.6M544.5 214.2V220.0M544.5 220.0V227.4M545.5 214.2V220.0M549.5 214.6V220.0M549.5 220.0V225.3M550.5 220.0V227.8M551.5 212.3V220.0M551.5 220.0V226.9M553.5 213.0V220.0M553.5 220.0V227.7M554.5 212.4V220.0M555.5 220.0V228.0M557.5 220.0V228.6M559.5 213.9V220.0M561.5 220.0V226.9M563.5 214.5V220.0M563.5 220.0V226.7M564.5 220.0V227.4M565.5 213.3V220.0M565.5 220.0V227.2M566.5 213.0V220.0M566.5 220.0V227.9M568.5 214.1V220.0M568.5 220.0V226.7M569.5 212.3V220.0M569.5 220.0V226.8M570.5 213.9V220.0M570.5 220.0V228.1M572.5 211.7V220.0M572.5 220.0V226.3M574.5 212.9V220.0M575.5 214.1V220.0M577.5 213.6V220.0M577.5 220.0V225.4M578.5 220.0V225.5M579.5 211.3V220.0M579.5 220.0V227.8M585.5 108.1V115.0M585.5 115.0V123.4M586.5 115.0V120.8M587.5 109.0V115.0M590.5 109.4V115.0M590.5 115.0V122.4M591.5 106.4V115.0M596.5 109.4V115.0M597.5 108.0V115.0M597.5 115.0V120.6M601.5 108.2V115.0M602.5 115.0V123.5M606.5 109.3V115.0M607.5 107.3V115.0M608.5 115.0V123.3M610.5 108.4V115.0M611.5 108.2V115.0M611.5 115.0V121.8M612.5 109.3V115.0M612.5 115.0V123.5M614.5 107.4V115.0M617.5 108.1V115.0M617.5 115.0V122.6M619.5 115.0V123.2M621.5 115.0V120.5M622.5 109.2V115.0M622.5 115.0V123.1M625.5 115.0V122.0M627.5 107.2V115.0M628.5 107.7V115.0M630.5 108.1V115.0M631.5 106.6V115.0M631.5 115.0V122.2M632.5 106.5V115.0M632.5 115.0V123.1M633.5 115.0V121.3M635.5 106.8V115.0M635.5 115.0V122.1M637.5 108.4V115.0M638.5 115.0V123.3M639.5 108.0V115.0M639.5 115.0V122.1M640.5 108.3V115.0M641.5 115.0V122.3M642.5 107.2V115.0M643.5 115.0V123.4M644.5 213.6V220.0M644.5 220.0V226.1M645.5 212.7V220.0M647.5 220.0V227.0M648.5 211.7V220.0M649.5 220.0V226.8M650.5 213.8V220.0M653.5 220.0V226.6M654.5 220.0V226.5M655.5 211.6V220.0M655.5 220.0V228.3M656.5 220.0V228.2M657.5 211.5V220.0M657.5 220.0V227.5M658.5 211.5V220.0M658.5 220.0V225.7M659.5 212.9V220.0M659.5 220.0V225.6M660.5 220.0V227.5M662.5 213.5V220.0M662.5 220.0V225.3M663.5 211.9V220.0M663.5 220.0V226.1M664.5 220.0V227.9M665.5 211.6V220.0M666.5 220.0V228.2M667.5 220.0V227.8M668.5 220.0V226.8M669.5 214.3V220.0M669.5 220.0V228.3M670.5 211.8V220.0M670.5 220.0V227.0M674.5 211.7V220.0M674.5 220.0V227.5M675.5 214.1V220.0M675.5 220.0V226.3M676.5 213.2V220.0M680.5 211.6V220.0" stroke="#f4f400" stroke-width="1" fill="none" opacity="0.22"/><path d="M30.5 214.2V224.6M31.5 216.4V224.2M32.5 216.2V223.4M33.5 215.3V225.1M34.5 214.4V225.2M35.5 214.1V225.6M36.5 215.0V225.4M37.5 214.5V223.9M38.5 215.5V224.0M39.5 214.4V225.1M40.5 216.4V224.9M41.5 216.1V223.8M42.5 216.1V225.9M43.5 214.8V224.1M44.5 216.0V224.9M45.5 215.9V224.6M46.5 214.9V225.2M47.5 214.9V224.7M48.5 214.8V225.5M49.5 214.4V224.9M50.5 214.7V224.4M51.5 216.5V225.0M52.5 216.6V224.2M53.5 215.7V225.1M54.5 215.8V223.8M55.5 216.2V224.6M56.5 215.4V223.6M57.5 216.2V224.6M58.5 214.5V225.9M59.5 215.9V224.3M60.5 214.2V223.6M61.5 215.6V224.9M62.5 214.7V225.5M63.5 215.2V225.5M64.5 215.3V223.5M65.5 216.2V224.7M66.5 111.4V119.0M67.5 110.8V119.4M68.5 110.1V118.9M69.5 109.5V119.9M70.5 110.9V119.6M71.5 110.0V120.8M72.5 110.0V118.7M73.5 110.6V119.5M74.5 110.0V120.6M75.5 111.0V121.0M76.5 110.5V120.5M77.5 111.3V119.7M78.5 111.5V119.8M79.5 109.0V120.8M80.5 110.3V119.5M81.5 110.5V118.9M82.5 110.5V120.0M83.5 109.6V120.5M84.5 109.7V118.6M85.5 109.9V119.3M86.5 109.8V120.4M87.5 111.1V119.4M88.5 109.0V120.1M89.5 111.2V119.7M90.5 110.9V120.1M91.5 109.6V119.4M92.5 110.5V119.6M93.5 109.5V120.0M94.5 109.9V119.6M95.5 111.0V118.7M96.5 110.1V119.9M97.5 109.3V118.5M98.5 110.0V119.4M99.5 109.5V120.0M100.5 109.0V119.2M101.5 109.3V118.6M102.5 111.0V120.1M103.5 109.7V119.4M104.5 109.5V119.2M105.5 110.7V119.4M106.5 111.1V120.4M107.5 109.9V120.5M108.5 110.0V118.8M109.5 109.6V119.4M110.5 109.2V119.5M111.5 109.1V120.1M112.5 109.7V121.0M113.5 111.3V120.1M114.5 111.3V118.9M115.5 111.2V120.4M116.5 110.7V119.8M117.5 110.2V119.7M118.5 109.7V120.0M119.5 110.9V119.8M120.5 109.7V118.7M121.5 109.5V119.5M122.5 109.4V119.2M123.5 110.6V119.6M124.5 110.1V119.6M125.5 110.2V119.2M126.5 109.1V119.9M127.5 110.6V120.6M128.5 109.2V119.5M129.5 110.5V118.4M130.5 110.7V119.3M131.5 111.2V120.4M132.5 109.0V119.7M133.5 111.4V119.0M134.5 216.3V225.9M135.5 214.0V225.5M136.5 214.4V223.9M137.5 215.8V225.1M138.5 215.6V224.9M139.5 216.2V225.9M140.5 214.6V224.7M141.5 214.2V224.8M142.5 215.0V225.4M143.5 214.8V224.8M144.5 215.5V225.5M145.5 214.1V223.4M146.5 215.1V223.5M147.5 215.8V225.8M148.5 214.0V223.9M149.5 214.3V225.3M150.5 216.1V223.9M151.5 216.0V224.2M152.5 215.5V224.8M153.5 215.9V225.4M154.5 215.4V225.4M155.5 214.9V225.4M156.5 216.1V225.4M157.5 215.3V224.0M158.5 216.1V223.8M159.5 215.1V224.8M160.5 215.9V224.9M161.5 216.4V224.5M162.5 215.4V225.3M163.5 216.4V223.5M164.5 216.0V224.6M165.5 214.9V223.6M166.5 214.4V224.4M167.5 216.0V224.6M168.5 216.4V225.2M169.5 215.9V224.3M170.5 215.6V223.6M171.5 216.2V224.9M172.5 214.9V223.8M173.5 215.8V224.3M174.5 214.9V225.8M175.5 216.4V224.5M176.5 215.4V223.8M177.5 214.8V224.8M178.5 215.1V224.6M179.5 216.1V224.6M180.5 215.0V225.0M181.5 216.2V224.7M182.5 216.0V223.4M183.5 215.1V225.6M184.5 214.8V225.9M185.5 214.7V224.8M186.5 216.3V225.2M187.5 216.5V224.1M188.5 215.8V224.3M189.5 215.0V225.6M190.5 215.1V225.8M191.5 214.0V223.5M192.5 215.7V223.5M193.5 215.9V224.4M194.5 214.5V223.8M195.5 111.5V119.9M196.5 111.4V120.7M197.5 110.5V120.5M198.5 109.4V121.0M199.5 110.7V120.4M200.5 109.7V119.4M201.5 110.6V120.2M202.5 109.5V119.3M203.5 109.7V118.9M204.5 110.7V119.5M205.5 110.8V120.4M206.5 110.9V120.2M207.5 110.6V120.1M208.5 111.3V120.6M209.5 110.0V119.9M210.5 111.2V119.6M211.5 109.3V118.7M212.5 109.4V120.5M213.5 110.4V119.8M214.5 111.0V120.5M215.5 110.6V118.7M216.5 110.0V120.7M217.5 110.5V118.4M218.5 111.3V120.2M219.5 109.0V120.2M220.5 109.5V119.5M221.5 110.1V119.1M222.5 109.7V120.0M223.5 109.9V119.0M224.5 109.4V119.9M225.5 110.7V120.7M226.5 109.9V120.0M227.5 109.8V121.0M228.5 111.2V119.4M229.5 109.5V120.3M230.5 110.7V119.8M231.5 111.3V118.6M232.5 110.4V119.9M233.5 110.5V120.0M234.5 109.7V118.8M235.5 111.5V119.5M236.5 109.1V119.9M237.5 110.6V119.5M238.5 110.2V119.4M239.5 111.6V119.5M240.5 110.8V120.0M241.5 110.9V119.1M242.5 109.0V120.6M243.5 111.5V120.0M244.5 111.6V120.3M245.5 110.6V119.6M246.5 111.3V118.7M247.5 109.4V118.7M248.5 110.3V120.2M249.5 111.2V119.3M250.5 110.1V119.6M251.5 110.9V118.6M252.5 109.2V119.6M253.5 110.1V119.8M254.5 111.0V118.9M255.5 109.2V120.2M256.5 111.0V118.5M257.5 110.9V119.1M258.5 110.2V120.3M259.5 109.2V119.3M260.5 215.1V224.3M261.5 216.3V226.0M262.5 214.4V225.4M263.5 216.1V225.2M264.5 215.8V224.3M265.5 214.2V223.5M266.5 216.4V224.8M267.5 214.4V225.2M268.5 214.5V225.9M269.5 215.2V224.3M270.5 215.9V224.6M271.5 214.3V223.9M272.5 214.6V224.0M273.5 215.6V223.8M274.5 215.1V225.3M275.5 216.2V223.9M276.5 214.7V225.9M277.5 215.6V223.7M278.5 215.2V224.8M279.5 216.4V224.2M280.5 215.8V225.5M281.5 214.1V225.9M282.5 216.5V224.0M283.5 215.8V223.5M284.5 215.1V224.5M285.5 214.4V225.7M286.5 215.1V223.8M287.5 214.2V224.7M288.5 216.4V224.7M289.5 214.5V224.0M290.5 215.2V225.9M291.5 216.1V224.0M292.5 214.7V225.5M293.5 215.3V224.3M294.5 214.9V223.7M295.5 214.0V225.0M296.5 214.1V225.1M297.5 214.6V225.2M298.5 215.7V225.8M299.5 215.9V224.8M300.5 216.1V224.9M301.5 215.5V224.5M302.5 215.2V225.1M303.5 216.1V225.4M304.5 214.6V225.1M305.5 216.5V223.6M306.5 214.9V225.2M307.5 215.6V224.6M308.5 216.3V224.2M309.5 214.5V225.2M310.5 214.6V224.6M311.5 214.6V224.4M312.5 214.9V224.5M313.5 216.6V224.5M314.5 214.2V223.6M315.5 214.6V225.3M316.5 214.6V224.2M317.5 216.2V225.0M318.5 215.0V224.6M319.5 216.4V224.2M320.5 215.2V223.5M321.5 216.3V223.6M322.5 214.5V225.6M323.5 110.8V119.5M324.5 110.0V118.8M325.5 111.2V119.3M326.5 109.7V118.5M327.5 110.7V121.0M328.5 109.9V120.2M329.5 110.9V118.4M330.5 109.3V120.4M331.5 110.3V119.6M332.5 110.8V118.5M333.5 109.8V120.2M334.5 109.2V120.6M335.5 110.3V121.0M336.5 109.2V119.5M337.5 109.8V119.0M338.5 111.4V120.4M339.5 109.6V118.5M340.5 110.9V120.6M341.5 110.9V120.3M342.5 111.4V118.9M343.5 110.6V120.3M344.5 109.0V119.4M345.5 109.6V119.9M346.5 110.0V120.3M347.5 111.5V120.7M348.5 110.9V118.9M349.5 111.2V119.9M350.5 109.3V119.9M351.5 109.8V120.8M352.5 110.6V120.6M353.5 109.1V120.7M354.5 111.2V119.4M355.5 111.1V119.6M356.5 109.4V118.9M357.5 109.9V118.6M358.5 110.8V119.4M359.5 111.1V120.0M360.5 111.4V118.7M361.5 111.3V120.1M362.5 110.7V118.7M363.5 109.8V120.9M364.5 110.3V119.7M365.5 110.4V119.7M366.5 109.0V118.5M367.5 109.6V119.6M368.5 111.2V120.7M369.5 109.2V119.3M370.5 111.1V118.5M371.5 111.4V120.8M372.5 111.5V119.7M373.5 111.2V120.3M374.5 111.4V118.8M375.5 109.1V120.0M376.5 109.1V119.5M377.5 109.4V120.5M378.5 111.3V120.5M379.5 110.9V120.4M380.5 109.7V118.5M381.5 109.5V120.0M382.5 110.7V120.8M383.5 111.3V118.6M384.5 109.9V119.6M385.5 109.7V120.2M386.5 109.1V119.2M387.5 109.5V118.4M388.5 215.5V224.8M389.5 216.6V226.0M390.5 214.5V225.8M391.5 215.7V224.0M392.5 215.6V224.6M393.5 215.6V224.3M394.5 216.2V224.9M395.5 214.5V223.6M396.5 215.4V225.5M397.5 214.0V223.9M398.5 214.3V225.7M399.5 214.5V223.6M400.5 215.1V224.2M401.5 215.8V223.7M402.5 216.3V225.4M403.5 214.4V225.7M404.5 214.5V225.6M405.5 215.6V225.9M406.5 216.6V224.0M407.5 214.7V223.6M408.5 214.2V223.7M409.5 215.1V225.8M410.5 214.9V225.0M411.5 216.0V224.0M412.5 215.4V225.3M413.5 214.9V223.8M414.5 214.4V225.5M415.5 214.7V224.7M416.5 215.6V225.1M417.5 214.8V224.8M418.5 214.2V225.2M419.5 216.4V225.1M420.5 214.5V226.0M421.5 216.6V225.6M422.5 215.4V225.7M423.5 216.3V224.2M424.5 216.1V224.8M425.5 215.2V223.6M426.5 214.7V223.5M427.5 215.0V225.0M428.5 214.9V224.1M429.5 214.3V225.8M430.5 215.2V223.4M431.5 214.8V223.5M432.5 214.6V224.9M433.5 216.1V223.4M434.5 216.5V225.0M435.5 216.5V224.7M436.5 216.5V225.0M437.5 216.0V223.8M438.5 214.2V223.6M439.5 215.0V225.1M440.5 215.6V225.5M441.5 216.1V224.7M442.5 214.3V224.4M443.5 216.4V225.5M444.5 214.9V225.5M445.5 214.8V225.5M446.5 215.7V223.5M447.5 214.1V225.4M448.5 214.1V224.7M449.5 215.4V224.5M450.5 216.3V223.6M451.5 215.9V225.6M452.5 214.1V224.9M453.5 216.6V223.5M454.5 109.2V120.3M455.5 110.7V120.9M456.5 111.3V120.4M457.5 110.0V120.8M458.5 109.9V120.6M459.5 110.3V120.0M460.5 110.5V120.7M461.5 111.4V119.0M462.5 110.0V119.6M463.5 109.1V120.0M464.5 109.7V118.9M465.5 111.4V118.4M466.5 110.0V120.0M467.5 109.1V119.7M468.5 110.3V121.0M469.5 111.2V119.3M470.5 110.8V120.9M471.5 111.2V119.0M472.5 109.5V119.0M473.5 109.8V119.1M474.5 110.2V119.9M475.5 111.5V118.9M476.5 109.1V120.1M477.5 110.4V118.7M478.5 110.1V118.6M479.5 109.6V121.0M480.5 111.3V118.5M481.5 109.0V120.0M482.5 111.3V118.7M483.5 109.1V119.6M484.5 109.8V119.2M485.5 109.7V119.1M486.5 110.2V118.7M487.5 110.0V118.7M488.5 109.9V118.5M489.5 109.5V120.0M490.5 109.9V119.9M491.5 109.6V120.2M492.5 110.0V119.5M493.5 110.5V120.0M494.5 110.4V120.1M495.5 110.4V120.9M496.5 111.4V119.2M497.5 111.4V119.4M498.5 111.4V119.9M499.5 109.3V118.9M500.5 110.4V118.9M501.5 110.4V119.3M502.5 109.3V120.0M503.5 109.8V118.9M504.5 110.6V118.6M505.5 109.4V120.8M506.5 109.6V118.6M507.5 110.0V119.5M508.5 110.2V120.1M509.5 111.4V118.5M510.5 111.4V120.3M511.5 110.6V118.5M512.5 109.2V120.8M513.5 109.9V119.6M514.5 110.2V119.2M515.5 215.2V225.2M516.5 216.1V224.7M517.5 215.0V225.3M518.5 215.4V224.1M519.5 214.9V225.8M520.5 214.5V224.7M521.5 215.3V224.6M522.5 215.5V224.6M523.5 216.4V225.3M524.5 214.9V223.6M525.5 216.4V225.6M526.5 215.8V225.9M527.5 214.1V225.8M528.5 214.1V224.6M529.5 214.3V224.3M530.5 216.2V225.1M531.5 214.6V225.4M532.5 216.1V223.4M533.5 215.1V224.8M534.5 215.0V224.1M535.5 214.0V225.5M536.5 215.6V225.8M537.5 214.3V224.2M538.5 214.9V223.5M539.5 215.2V223.6M540.5 216.2V223.6M541.5 215.1V224.9M542.5 215.5V224.3M543.5 216.4V223.8M544.5 216.5V225.6M545.5 215.4V225.9M546.5 216.0V223.5M547.5 215.0V225.0M548.5 215.1V223.6M549.5 215.6V224.3M550.5 214.3V224.7M551.5 216.1V224.5M552.5 214.8V225.3M553.5 214.2V224.2M554.5 214.8V224.6M555.5 215.3V226.0M556.5 216.0V224.0M557.5 215.1V225.7M558.5 215.8V225.8M559.5 215.9V223.7M560.5 214.5V223.7M561.5 214.3V225.4M562.5 216.2V223.9M563.5 215.1V225.3M564.5 214.1V225.0M565.5 214.2V225.9M566.5 214.3V223.7M567.5 216.4V224.1M568.5 216.1V225.3M569.5 215.1V224.1M570.5 215.1V223.5M571.5 215.8V224.7M572.5 216.6V224.3M573.5 216.0V224.0M574.5 214.9V224.0M575.5 214.0V225.0M576.5 214.2V224.2M577.5 215.6V225.6M578.5 216.4V224.1M579.5 215.2V225.3M580.5 214.3V223.7M581.5 110.6V119.2M582.5 111.5V120.7M583.5 109.7V120.2M584.5 110.8V119.7M585.5 109.7V118.6M586.5 110.7V120.9M587.5 110.5V120.8M588.5 109.6V118.6M589.5 111.3V119.2M590.5 111.1V120.0M591.5 109.4V119.1M592.5 110.7V119.0M593.5 111.3V119.4M594.5 110.8V120.3M595.5 109.0V119.9M596.5 111.0V120.2M597.5 111.1V119.7M598.5 111.4V118.7M599.5 111.6V118.8M600.5 109.2V120.7M601.5 109.2V119.9M602.5 111.0V120.2M603.5 110.8V119.0M604.5 110.6V120.5M605.5 110.2V120.2M606.5 109.4V120.4M607.5 109.4V120.9M608.5 109.4V119.2M609.5 110.5V118.6M610.5 111.5V118.5M611.5 109.6V120.1M612.5 109.4V120.2M613.5 110.6V120.3M614.5 111.1V119.9M615.5 110.3V119.6M616.5 111.4V119.4M617.5 109.8V119.7M618.5 110.4V120.4M619.5 111.1V119.4M620.5 110.8V119.9M621.5 110.2V119.1M622.5 110.0V119.7M623.5 110.1V119.5M624.5 109.7V119.5M625.5 110.6V120.3M626.5 110.9V119.1M627.5 110.5V120.1M628.5 110.0V119.3M629.5 109.7V120.2M630.5 111.0V120.9M631.5 110.7V119.3M632.5 111.4V119.8M633.5 110.9V119.3M634.5 110.1V119.9M635.5 110.5V119.5M636.5 110.2V120.3M637.5 110.3V120.7M638.5 110.5V120.2M639.5 111.5V119.7M640.5 111.1V119.0M641.5 110.3V118.4M642.5 111.6V118.7M643.5 110.1V119.8M644.5 215.1V225.9M645.5 214.3V223.6M646.5 214.2V225.0M647.5 215.8V225.9M648.5 215.3V225.6M649.5 215.2V224.3M650.5 216.4V225.8M651.5 216.5V223.5M652.5 215.9V224.8M653.5 215.4V225.6M654.5 215.0V224.7M655.5 214.6V223.7M656.5 214.9V223.5M657.5 214.3V225.3M658.5 214.7V223.7M659.5 214.4V225.5M660.5 214.1V225.9M661.5 214.4V225.0M662.5 215.5V225.4M663.5 216.5V226.0M664.5 214.8V225.3M665.5 214.2V224.1M666.5 214.9V224.4M667.5 216.5V225.1M668.5 216.3V224.8M669.5 214.8V224.9M670.5 214.2V223.8M671.5 216.4V224.6M672.5 216.1V223.9M673.5 214.2V225.9M674.5 216.5V225.1M675.5 214.6V225.8M676.5 216.3V224.2M677.5 216.1V225.1M678.5 214.7V225.5M679.5 215.8V224.7M680.5 215.2V224.5" stroke="#f4f400" stroke-width="1" fill="none" opacity="0.6"/><path d="M30.5 216.8V223.4M31.5 216.5V223.8M32.5 216.4V223.5M33.5 216.8V223.9M34.5 215.8V224.2M35.5 216.1V223.1M36.5 216.9V222.5M37.5 217.4V222.5M38.5 216.4V222.6M39.5 217.2V223.1M40.5 217.1V222.5M41.5 216.6V224.0M42.5 216.3V224.1M43.5 215.9V222.8M44.5 216.3V222.5M45.5 217.2V222.4M46.5 216.0V224.2M47.5 215.9V222.4M48.5 216.0V223.7M49.5 216.8V223.8M50.5 215.8V224.0M51.5 217.4V223.8M52.5 215.9V222.9M53.5 216.8V224.0M54.5 216.9V223.4M55.5 215.9V222.9M56.5 216.1V224.2M57.5 216.2V222.4M58.5 216.5V223.6M59.5 216.3V222.7M60.5 216.9V223.8M61.5 216.5V224.0M62.5 216.4V222.8M63.5 215.8V224.2M64.5 216.6V223.8M65.5 216.2V222.7M66.5 111.7V119.1M67.5 111.1V118.4M68.5 110.9V118.3M69.5 111.7V118.1M70.5 110.9V119.1M71.5 112.0V117.7M72.5 112.0V118.0M73.5 111.6V118.2M74.5 111.6V118.9M75.5 112.0V119.1M76.5 112.4V118.9M77.5 111.0V119.1M78.5 112.5V117.6M79.5 112.2V118.9M80.5 112.0V118.2M81.5 111.8V118.7M82.5 111.1V118.5M83.5 111.0V118.7M84.5 111.2V118.1M85.5 112.2V119.1M86.5 110.8V118.6M87.5 111.9V117.5M88.5 110.9V118.4M89.5 112.3V118.2M90.5 111.5V118.1M91.5 112.5V117.7M92.5 112.5V119.0M93.5 111.8V119.2M94.5 112.4V118.2M95.5 110.9V118.7M96.5 112.1V118.6M97.5 110.8V119.0M98.5 111.4V118.4M99.5 112.5V117.6M100.5 111.9V118.6M101.5 111.9V117.6M102.5 111.2V117.5M103.5 112.3V118.0M104.5 111.0V118.2M105.5 111.9V118.1M106.5 111.1V118.4M107.5 111.6V119.1M108.5 111.0V117.6M109.5 111.2V118.3M110.5 111.3V118.7M111.5 111.1V119.0M112.5 111.8V117.7M113.5 112.5V118.0M114.5 111.0V117.5M115.5 112.3V117.9M116.5 111.0V119.0M117.5 111.2V118.1M118.5 111.9V118.8M119.5 111.5V119.2M120.5 112.5V117.9M121.5 111.1V117.9M122.5 111.7V117.7M123.5 111.4V117.6M124.5 111.3V117.8M125.5 112.1V118.1M126.5 111.3V118.0M127.5 111.3V117.7M128.5 111.9V117.5M129.5 111.9V118.0M130.5 111.5V117.4M131.5 111.1V118.5M132.5 112.3V118.7M133.5 111.5V117.8M134.5 216.9V223.2M135.5 217.1V224.0M136.5 217.2V223.4M137.5 215.9V223.6M138.5 216.8V222.7M139.5 217.5V223.6M140.5 216.4V223.8M141.5 216.8V223.4M142.5 216.0V223.7M143.5 216.9V222.5M144.5 216.4V224.0M145.5 217.4V223.4M146.5 216.9V223.0M147.5 216.7V222.8M148.5 217.3V224.0M149.5 217.0V224.0M150.5 217.0V223.7M151.5 216.0V223.5M152.5 217.4V224.2M153.5 216.2V222.6M154.5 215.8V222.5M155.5 216.4V223.0M156.5 216.7V224.1M157.5 216.2V222.8M158.5 216.6V224.0M159.5 217.5V224.0M160.5 216.5V223.3M161.5 216.1V223.8M162.5 215.8V222.7M163.5 217.1V223.2M164.5 217.1V223.4M165.5 217.5V223.1M166.5 216.8V223.1M167.5 217.3V222.8M168.5 217.2V223.1M169.5 215.9V223.7M170.5 217.6V223.0M171.5 217.2V222.5M172.5 217.1V223.7M173.5 216.0V222.8M174.5 215.8V222.9M175.5 217.2V223.5M176.5 217.3V223.1M177.5 217.3V223.4M178.5 217.5V223.3M179.5 217.1V223.6M180.5 215.9V223.8M181.5 216.0V222.5M182.5 217.2V223.6M183.5 216.6V223.5M184.5 216.3V223.7M185.5 216.9V222.9M186.5 217.5V222.5M187.5 216.0V224.0M188.5 217.1V223.7M189.5 216.8V223.7M190.5 217.3V222.4M191.5 216.9V224.1M192.5 215.8V222.6M193.5 216.2V223.9M194.5 216.4V223.4M195.5 112.4V118.0M196.5 112.1V117.5M197.5 111.0V118.3M198.5 112.1V119.1M199.5 112.4V117.5M200.5 111.1V118.8M201.5 112.4V119.1M202.5 111.9V118.6M203.5 112.4V118.0M204.5 112.4V117.7M205.5 112.2V119.0M206.5 111.3V117.7M207.5 112.3V118.5M208.5 111.7V118.4M209.5 111.9V117.8M210.5 111.5V119.1M211.5 110.8V118.1M212.5 111.4V119.1M213.5 112.1V118.9M214.5 111.2V118.3M215.5 111.2V117.7M216.5 111.9V118.9M217.5 112.2V118.6M218.5 111.3V117.7M219.5 112.0V117.8M220.5 111.5V118.2M221.5 111.3V117.8M222.5 110.9V118.1M223.5 112.1V118.7M224.5 112.0V118.9M225.5 111.3V118.6M226.5 111.8V118.0M227.5 111.1V118.6M228.5 112.2V118.1M229.5 111.3V117.9M230.5 111.0V117.4M231.5 112.4V118.4M232.5 112.5V117.8M233.5 110.9V118.3M234.5 111.1V118.7M235.5 111.4V118.9M236.5 111.4V119.0M237.5 111.3V117.9M238.5 112.5V118.4M239.5 111.3V118.3M240.5 111.5V118.1M241.5 112.5V117.6M242.5 111.4V117.6M243.5 112.5V118.8M244.5 111.2V118.4M245.5 111.8V118.8M246.5 111.4V118.4M247.5 111.9V118.4M248.5 111.4V119.1M249.5 112.2V118.0M250.5 111.1V118.0M251.5 111.3V118.4M252.5 111.6V119.2M253.5 112.5V118.7M254.5 112.4V118.8M255.5 111.6V119.0M256.5 111.3V117.9M257.5 111.7V117.9M258.5 111.1V118.5M259.5 112.1V117.5M260.5 215.9V223.3M261.5 217.4V223.4M262.5 215.8V223.6M263.5 217.0V223.3M264.5 216.6V222.6M265.5 215.9V223.9M266.5 216.5V224.1M267.5 217.6V222.5M268.5 217.6V222.5M269.5 217.1V223.5M270.5 217.3V222.7M271.5 216.7V222.9M272.5 216.6V222.5M273.5 216.0V224.2M274.5 216.9V222.9M275.5 217.5V224.0M276.5 215.9V222.7M277.5 215.9V223.2M278.5 217.3V222.6M279.5 217.5V222.8M280.5 217.0V223.4M281.5 216.8V222.7M282.5 216.3V222.8M283.5 217.3V222.4M284.5 217.0V224.0M285.5 217.2V224.1M286.5 216.3V222.8M287.5 216.6V223.3M288.5 216.5V223.2M289.5 216.8V222.6M290.5 216.7V223.2M291.5 216.7V223.0M292.5 216.4V223.8M293.5 215.9V222.4M294.5 216.4V222.5M295.5 216.4V223.8M296.5 216.0V223.4M297.5 217.2V223.6M298.5 216.4V224.1M299.5 216.2V223.0M300.5 216.3V222.8M301.5 215.9V223.6M302.5 216.4V223.8M303.5 215.8V223.3M304.5 216.3V223.0M305.5 215.9V224.0M306.5 216.3V223.1M307.5 217.6V222.5M308.5 217.0V224.2M309.5 216.0V222.9M310.5 216.9V222.9M311.5 216.0V224.2M312.5 215.9V223.6M313.5 217.0V223.7M314.5 215.8V222.8M315.5 216.5V223.7M316.5 215.8V222.6M317.5 216.6V223.3M318.5 216.8V222.7M319.5 217.0V223.8M320.5 217.1V223.0M321.5 217.2V222.7M322.5 216.3V222.5M323.5 112.2V118.3M324.5 112.2V117.8M325.5 111.0V118.6M326.5 111.9V117.8M327.5 112.4V117.5M328.5 112.3V117.9M329.5 112.2V117.9M330.5 111.7V118.0M331.5 111.9V118.1M332.5 112.2V117.4M333.5 111.0V118.9M334.5 111.0V119.2M335.5 112.0V119.0M336.5 112.4V118.4M337.5 111.8V119.0M338.5 111.4V117.8M339.5 111.1V118.7M340.5 110.9V118.0M341.5 111.9V118.9M342.5 110.9V118.6M343.5 111.4V118.5M344.5 112.5V117.5M345.5 111.7V118.3M346.5 111.8V118.9M347.5 112.3V117.5M348.5 112.5V117.6M349.5 111.6V118.1M350.5 112.0V117.4M351.5 111.3V118.1M352.5 110.9V117.7M353.5 111.9V118.5M354.5 111.4V119.1M355.5 112.0V118.5M356.5 111.4V117.7M357.5 112.1V119.2M358.5 110.9V118.2M359.5 111.2V119.1M360.5 111.4V119.1M361.5 111.1V118.1M362.5 111.5V118.9M363.5 111.6V119.0M364.5 112.1V118.5M365.5 111.2V117.9M366.5 111.7V118.0M367.5 111.8V118.5M368.5 111.7V117.6M369.5 111.5V117.5M370.5 111.0V118.8M371.5 112.2V118.6M372.5 111.0V118.8M373.5 111.6V118.0M374.5 111.8V117.6M375.5 111.9V117.7M376.5 111.5V119.0M377.5 112.0V118.0M378.5 112.1V118.0M379.5 111.0V117.6M380.5 111.8V117.9M381.5 112.4V117.5M382.5 112.0V119.2M383.5 112.4V118.4M384.5 110.9V118.8M385.5 111.9V118.3M386.5 112.5V117.7M387.5 112.0V118.9M388.5 216.5V223.6M389.5 216.6V223.4M390.5 217.3V223.8M391.5 216.7V222.6M392.5 216.8V223.2M393.5 217.3V222.5M394.5 216.9V223.0M395.5 217.2V223.7M396.5 216.8V223.0M397.5 215.9V222.7M398.5 216.4V222.8M399.5 215.9V223.5M400.5 216.6V223.1M401.5 217.5V222.9M402.5 216.7V222.4M403.5 216.7V223.8M404.5 216.6V223.3M405.5 217.5V223.3M406.5 217.0V224.0M407.5 217.5V223.7M408.5 217.4V224.0M409.5 216.7V223.2M410.5 217.2V223.2M411.5 216.1V222.5M412.5 215.9V223.7M413.5 216.4V223.0M414.5 215.9V223.9M415.5 217.5V222.5M416.5 216.4V223.6M417.5 217.2V223.2M418.5 216.9V223.7M419.5 217.0V223.0M420.5 216.1V224.1M421.5 216.5V223.1M422.5 216.2V224.2M423.5 217.1V223.6M424.5 217.0V224.2M425.5 216.7V222.9M426.5 216.5V224.0M427.5 217.3V223.4M428.5 216.9V222.5M429.5 216.0V224.2M430.5 217.4V223.7M431.5 216.8V222.5M432.5 216.3V223.0M433.5 216.2V223.1M434.5 217.5V222.7M435.5 217.2V222.7M436.5 216.6V222.6M437.5 216.1V223.7M438.5 217.5V223.1M439.5 217.2V223.2M440.5 216.1V222.8M441.5 216.3V222.8M442.5 215.9V223.9M443.5 217.6V222.6M444.5 217.4V223.5M445.5 217.5V224.0M446.5 216.1V222.8M447.5 216.8V224.0M448.5 217.5V223.6M449.5 216.3V223.9M450.5 216.8V222.5M451.5 216.6V222.7M452.5 216.8V223.9M453.5 217.2V222.8M454.5 112.2V118.5M455.5 111.4V119.0M456.5 111.5V117.8M457.5 111.1V119.2M458.5 111.6V117.8M459.5 111.1V118.4M460.5 112.2V117.6M461.5 112.3V118.8M462.5 111.4V118.5M463.5 111.3V118.5M464.5 111.8V118.7M465.5 111.5V118.1M466.5 111.8V118.7M467.5 111.3V118.2M468.5 111.3V117.7M469.5 111.5V118.2M470.5 111.2V118.5M471.5 111.7V117.9M472.5 111.7V118.8M473.5 111.3V118.2M474.5 111.6V118.3M475.5 111.1V117.9M476.5 112.0V118.3M477.5 112.2V118.1M478.5 111.2V117.9M479.5 111.4V118.5M480.5 112.4V118.6M481.5 112.3V118.6M482.5 112.2V118.8M483.5 111.8V118.9M484.5 111.4V119.1M485.5 111.7V117.7M486.5 111.8V118.8M487.5 111.3V117.7M488.5 112.6V118.7M489.5 112.2V118.3M490.5 111.5V118.2M491.5 110.8V118.9M492.5 111.5V118.4M493.5 112.0V118.2M494.5 110.9V118.2M495.5 112.6V117.9M496.5 112.6V119.0M497.5 112.3V118.3M498.5 112.3V117.9M499.5 111.3V118.4M500.5 112.5V119.1M501.5 112.1V118.2M502.5 111.3V118.1M503.5 112.2V119.1M504.5 111.9V117.7M505.5 111.0V118.7M506.5 111.5V117.4M507.5 111.4V117.8M508.5 112.0V117.8M509.5 111.4V118.6M510.5 111.2V117.7M511.5 111.7V118.3M512.5 112.3V117.5M513.5 111.7V117.7M514.5 112.1V118.8M515.5 216.6V224.1M516.5 217.0V223.6M517.5 216.7V224.2M518.5 216.2V222.4M519.5 216.4V222.5M520.5 217.3V222.8M521.5 215.9V222.7M522.5 217.1V224.1M523.5 216.3V223.0M524.5 216.2V223.5M525.5 216.5V222.8M526.5 217.6V222.7M527.5 217.5V223.9M528.5 216.2V223.3M529.5 217.1V224.0M530.5 216.3V223.8M531.5 217.0V222.5M532.5 217.1V223.9M533.5 216.6V222.5M534.5 216.4V222.9M535.5 216.6V224.0M536.5 217.4V223.6M537.5 217.5V222.6M538.5 217.5V223.3M539.5 215.9V224.0M540.5 216.6V222.7M541.5 215.9V222.8M542.5 216.1V222.5M543.5 217.6V223.3M544.5 217.0V223.7M545.5 216.9V222.5M546.5 217.2V223.5M547.5 217.2V223.0M548.5 217.4V222.5M549.5 216.5V222.4M550.5 217.2V224.1M551.5 216.3V223.0M552.5 216.0V223.7M553.5 216.6V223.4M554.5 216.5V223.1M555.5 216.5V223.3M556.5 215.8V222.5M557.5 216.0V223.7M558.5 216.2V222.9M559.5 215.9V223.7M560.5 217.4V223.6M561.5 216.1V222.4M562.5 216.4V224.1M563.5 217.5V222.8M564.5 217.5V223.6M565.5 216.5V223.5M566.5 217.0V222.4M567.5 217.4V223.4M568.5 217.0V223.0M569.5 216.1V223.2M570.5 217.0V222.8M571.5 217.4V222.7M572.5 217.0V223.2M573.5 217.4V223.2M574.5 215.8V224.1M575.5 216.1V222.8M576.5 216.4V222.4M577.5 215.9V223.9M578.5 216.1V223.3M579.5 217.4V223.1M580.5 217.3V223.9M581.5 111.3V118.4M582.5 111.3V117.8M583.5 111.1V117.6M584.5 112.3V118.1M585.5 110.8V118.7M586.5 112.5V118.4M587.5 111.7V118.3M588.5 111.8V117.9M589.5 112.0V118.5M590.5 111.0V117.9M591.5 111.5V119.0M592.5 112.0V117.6M593.5 112.6V117.8M594.5 112.0V118.8M595.5 111.9V117.9M596.5 112.1V117.9M597.5 111.4V118.7M598.5 111.7V117.8M599.5 112.2V119.0M600.5 112.0V118.7M601.5 111.8V118.4M602.5 110.9V118.8M603.5 112.6V118.0M604.5 112.4V117.9M605.5 111.3V118.9M606.5 111.1V117.7M607.5 111.0V117.8M608.5 111.9V117.8M609.5 112.0V118.5M610.5 112.2V118.9M611.5 111.3V118.0M612.5 111.9V118.3M613.5 110.9V118.7M614.5 111.4V118.5M615.5 112.1V119.1M616.5 112.4V118.1M617.5 112.3V117.7M618.5 112.1V118.4M619.5 112.4V118.7M620.5 112.6V118.2M621.5 111.9V118.7M622.5 111.1V118.9M623.5 111.2V118.4M624.5 111.4V118.0M625.5 111.0V118.3M626.5 112.3V117.9M627.5 111.2V118.1M628.5 112.2V117.6M629.5 111.5V118.8M630.5 111.8V118.6M631.5 112.1V118.5M632.5 112.4V118.7M633.5 111.9V117.5M634.5 112.3V118.3M635.5 112.4V117.9M636.5 111.8V117.6M637.5 111.9V119.1M638.5 111.1V118.8M639.5 112.2V118.8M640.5 111.4V117.9M641.5 112.1V117.9M642.5 110.8V118.0M643.5 112.3V117.8M644.5 216.6V222.8M645.5 217.4V223.7M646.5 216.9V223.4M647.5 216.7V222.9M648.5 217.1V224.0M649.5 215.9V223.4M650.5 217.6V223.6M651.5 217.1V224.1M652.5 217.0V223.3M653.5 216.6V224.0M654.5 216.6V223.8M655.5 216.3V224.1M656.5 217.2V223.7M657.5 217.6V224.0M658.5 217.4V222.8M659.5 216.2V223.1M660.5 216.5V222.5M661.5 217.2V222.7M662.5 217.1V223.6M663.5 216.9V224.0M664.5 217.6V222.6M665.5 217.1V223.1M666.5 217.0V223.7M667.5 216.7V223.7M668.5 216.2V223.3M669.5 217.0V223.1M670.5 216.3V223.6M671.5 216.5V222.8M672.5 216.1V222.9M673.5 216.9V224.0M674.5 216.3V223.0M675.5 217.0V223.8M676.5 217.6V223.4M677.5 215.8V222.9M678.5 217.0V224.1M679.5 216.8V224.1M680.5 217.3V223.7" stroke="#f4f400" stroke-width="1" fill="none"/></g><path d="M37.5 240.5V345.3M99.5 240.5V345.3M167.5 240.5V345.3M228.5 240.5V345.3M293.5 240.5V345.3M355.5 240.5V345.3M422.5 240.5V345.3M486.5 240.5V345.3M549.5 240.5V345.3M613.5 240.5V345.3M678.5 240.5V345.3" stroke="#001818" stroke-width="1" fill="none"/><g filter="url(#vb)"><path d="M37.5 245.7V250.6M40.5 336.4V340.1M40.5 350.5V355.0M42.5 335.0V340.1M44.5 350.5V353.7M45.5 336.3V340.1M52.5 335.4V340.1M57.5 350.5V355.6M59.5 350.5V355.2M60.5 350.5V355.1M67.5 335.0V340.1M70.5 335.2V340.1M71.5 350.5V353.5M73.5 336.9V340.1M75.5 350.5V353.8M78.5 335.9V340.1M79.5 335.1V340.1M82.5 335.9V340.1M84.5 337.0V340.1M92.5 334.9V340.1M96.5 350.5V354.2M98.5 335.3V340.1M108.5 245.7V249.2M109.5 230.6V235.3M110.5 245.7V249.9M115.5 231.8V235.3M122.5 232.2V235.3M122.5 245.7V250.4M123.5 245.7V250.3M130.5 230.9V235.3M132.5 231.4V235.3M146.5 230.1V235.3M146.5 245.7V250.9M150.5 232.3V235.3M154.5 230.3V235.3M160.5 245.7V249.3M161.5 231.9V235.3M185.5 350.5V354.1M186.5 335.8V340.1M190.5 336.2V340.1M199.5 335.3V340.1M202.5 336.1V340.1M203.5 334.8V340.1M217.5 336.8V340.1M217.5 350.5V353.9M223.5 335.5V340.1M227.5 336.8V340.1M227.5 350.5V355.2M232.5 230.7V235.3M232.5 245.7V250.4M237.5 245.7V251.0M242.5 245.7V250.3M246.5 245.7V249.5M253.5 231.3V235.3M253.5 245.7V250.4M258.5 231.6V235.3M268.5 245.7V250.2M271.5 231.6V235.3M272.5 230.3V235.3M280.5 232.3V235.3M282.5 245.7V250.2M283.5 229.9V235.3M284.5 232.1V235.3M288.5 245.7V250.0M293.5 231.6V235.3M295.5 350.5V355.6M308.5 336.7V340.1M312.5 350.5V354.8M313.5 336.4V340.1M316.5 335.4V340.1M317.5 350.5V354.0M318.5 350.5V355.4M319.5 350.5V354.6M320.5 350.5V354.7M325.5 350.5V354.3M327.5 350.5V354.7M328.5 336.1V340.1M329.5 350.5V355.2M331.5 335.8V340.1M338.5 350.5V354.0M339.5 335.9V340.1M344.5 350.5V353.8M347.5 350.5V354.6M349.5 335.6V340.1M354.5 335.3V340.1M357.5 232.0V235.3M364.5 231.6V235.3M367.5 231.8V235.3M368.5 230.4V235.3M369.5 231.4V235.3M372.5 231.5V235.3M374.5 245.7V250.5M378.5 245.7V249.3M381.5 232.2V235.3M386.5 230.3V235.3M387.5 245.7V249.4M391.5 245.7V250.4M392.5 231.0V235.3M394.5 230.1V235.3M401.5 231.5V235.3M402.5 245.7V250.0M409.5 229.8V235.3M411.5 245.7V250.0M412.5 231.3V235.3M419.5 231.6V235.3M421.5 230.1V235.3M422.5 335.4V340.1M423.5 334.8V340.1M423.5 350.5V354.6M428.5 350.5V354.4M430.5 350.5V353.5M431.5 335.9V340.1M431.5 350.5V355.9M436.5 350.5V355.7M437.5 336.9V340.1M443.5 334.6V340.1M446.5 350.5V353.6M450.5 350.5V355.7M452.5 336.5V340.1M469.5 350.5V354.6M471.5 350.5V353.8M476.5 350.5V355.6M479.5 334.7V340.1M479.5 350.5V355.9M480.5 350.5V355.2M488.5 230.8V235.3M491.5 245.7V249.1M492.5 245.7V249.5M496.5 245.7V249.5M498.5 245.7V249.8M503.5 230.4V235.3M504.5 245.7V251.2M512.5 245.7V248.9M513.5 245.7V249.8M526.5 231.1V235.3M537.5 230.9V235.3M537.5 245.7V251.1M555.5 334.9V340.1M556.5 350.5V355.6M560.5 335.5V340.1M567.5 350.5V353.5M569.5 335.7V340.1M578.5 336.2V340.1M581.5 350.5V355.5M583.5 350.5V354.8M593.5 350.5V355.6M597.5 334.6V340.1M598.5 350.5V353.6M600.5 335.0V340.1M606.5 335.2V340.1M607.5 350.5V354.6M611.5 335.1V340.1M611.5 350.5V353.8M614.5 245.7V250.7M616.5 230.0V235.3M621.5 230.6V235.3M629.5 245.7V250.1M632.5 229.8V235.3M635.5 231.1V235.3M638.5 231.3V235.3M639.5 230.2V235.3M640.5 245.7V248.8M641.5 231.4V235.3M642.5 232.1V235.3M645.5 245.7V250.6M648.5 245.7V249.7M653.5 245.7V249.0M654.5 245.7V251.0M657.5 230.8V235.3M659.5 230.7V235.3M659.5 245.7V251.0M674.5 232.0V235.3M675.5 232.2V235.3M678.5 335.1V340.1" stroke="#00f0f0" stroke-width="1" fill="none" opacity="0.11"/><path d="M30.5 234.0V240.5M30.5 240.5V245.9M31.5 240.5V248.3M32.5 240.5V246.0M33.5 240.5V246.8M34.5 235.0V240.5M34.5 240.5V246.3M35.5 233.5V240.5M35.5 240.5V247.4M37.5 234.6V240.5M38.5 345.3V353.3M39.5 339.2V345.3M40.5 345.3V352.3M41.5 345.3V351.6M42.5 337.8V345.3M42.5 345.3V350.8M43.5 345.3V352.3M44.5 337.7V345.3M45.5 345.3V353.6M46.5 337.7V345.3M46.5 345.3V353.7M48.5 345.3V354.0M50.5 345.3V351.1M51.5 338.5V345.3M52.5 338.3V345.3M52.5 345.3V351.5M53.5 345.3V353.8M54.5 345.3V351.2M55.5 345.3V351.6M56.5 339.0V345.3M58.5 345.3V353.9M59.5 339.3V345.3M60.5 337.3V345.3M62.5 338.0V345.3M63.5 337.0V345.3M64.5 337.4V345.3M64.5 345.3V353.3M65.5 337.8V345.3M66.5 345.3V352.7M67.5 339.5V345.3M68.5 345.3V353.6M69.5 337.8V345.3M70.5 337.9V345.3M70.5 345.3V353.3M71.5 339.4V345.3M72.5 345.3V353.9M73.5 345.3V351.4M74.5 337.4V345.3M74.5 345.3V351.5M75.5 339.1V345.3M76.5 345.3V352.6M77.5 336.9V345.3M78.5 345.3V351.9M79.5 337.1V345.3M79.5 345.3V351.8M80.5 345.3V353.3M84.5 336.8V345.3M85.5 337.1V345.3M86.5 345.3V351.1M87.5 339.0V345.3M88.5 338.6V345.3M88.5 345.3V350.8M90.5 339.6V345.3M90.5 345.3V351.3M91.5 338.5V345.3M91.5 345.3V352.1M92.5 338.4V345.3M93.5 337.8V345.3M93.5 345.3V352.3M94.5 340.0V345.3M94.5 345.3V352.0M96.5 337.6V345.3M98.5 338.1V345.3M99.5 240.5V247.8M101.5 233.6V240.5M102.5 240.5V246.2M105.5 240.5V246.3M106.5 240.5V248.8M108.5 240.5V246.4M109.5 240.5V246.7M110.5 240.5V246.7M111.5 235.3V240.5M111.5 240.5V247.0M114.5 233.8V240.5M115.5 234.4V240.5M117.5 234.0V240.5M118.5 232.1V240.5M119.5 232.5V240.5M120.5 234.6V240.5M121.5 235.2V240.5M122.5 231.9V240.5M123.5 234.6V240.5M124.5 234.8V240.5M125.5 233.6V240.5M127.5 240.5V247.5M128.5 240.5V247.8M130.5 233.6V240.5M131.5 232.0V240.5M132.5 235.1V240.5M133.5 233.1V240.5M134.5 235.2V240.5M134.5 240.5V249.2M135.5 234.3V240.5M136.5 233.9V240.5M136.5 240.5V249.0M137.5 232.1V240.5M138.5 240.5V247.4M139.5 232.5V240.5M139.5 240.5V247.5M142.5 232.2V240.5M142.5 240.5V246.4M143.5 233.4V240.5M143.5 240.5V245.7M146.5 233.2V240.5M146.5 240.5V247.8M147.5 240.5V248.3M148.5 233.2V240.5M149.5 232.3V240.5M149.5 240.5V246.0M151.5 240.5V246.4M152.5 234.3V240.5M153.5 234.5V240.5M153.5 240.5V246.9M156.5 240.5V247.2M158.5 234.0V240.5M158.5 240.5V248.8M159.5 234.1V240.5M160.5 233.9V240.5M160.5 240.5V246.5M161.5 232.6V240.5M161.5 240.5V247.0M162.5 232.3V240.5M163.5 231.9V240.5M163.5 240.5V246.6M164.5 232.9V240.5M165.5 232.4V240.5M166.5 232.4V240.5M166.5 240.5V247.7M168.5 339.9V345.3M168.5 345.3V350.7M170.5 345.3V352.5M171.5 338.9V345.3M172.5 345.3V354.0M173.5 345.3V352.8M174.5 339.0V345.3M176.5 339.7V345.3M176.5 345.3V353.2M177.5 337.8V345.3M178.5 337.2V345.3M178.5 345.3V351.0M179.5 339.0V345.3M180.5 339.1V345.3M180.5 345.3V353.9M182.5 345.3V351.9M183.5 337.6V345.3M185.5 338.5V345.3M186.5 338.4V345.3M186.5 345.3V351.5M187.5 339.1V345.3M187.5 345.3V352.2M189.5 345.3V351.2M190.5 338.8V345.3M191.5 336.9V345.3M191.5 345.3V353.0M192.5 338.3V345.3M194.5 345.3V353.9M197.5 337.4V345.3M198.5 345.3V351.4M199.5 338.7V345.3M199.5 345.3V351.5M200.5 345.3V351.2M201.5 338.6V345.3M201.5 345.3V352.8M202.5 339.3V345.3M203.5 339.0V345.3M203.5 345.3V354.0M204.5 345.3V351.1M205.5 345.3V353.5M206.5 345.3V350.9M209.5 338.2V345.3M209.5 345.3V351.3M210.5 339.0V345.3M210.5 345.3V353.7M211.5 345.3V350.7M213.5 338.6V345.3M213.5 345.3V352.7M214.5 339.6V345.3M216.5 339.7V345.3M218.5 337.1V345.3M218.5 345.3V352.5M221.5 336.9V345.3M221.5 345.3V352.0M224.5 339.5V345.3M226.5 345.3V351.2M228.5 232.7V240.5M231.5 234.9V240.5M231.5 240.5V246.9M232.5 232.3V240.5M232.5 240.5V247.0M233.5 232.1V240.5M234.5 240.5V248.3M236.5 233.7V240.5M237.5 240.5V248.1M238.5 233.7V240.5M240.5 235.3V240.5M240.5 240.5V248.8M241.5 234.0V240.5M242.5 233.5V240.5M242.5 240.5V248.9M243.5 233.8V240.5M243.5 240.5V246.9M244.5 233.6V240.5M244.5 240.5V248.4M245.5 233.6V240.5M245.5 240.5V247.3M246.5 233.3V240.5M246.5 240.5V248.2M250.5 234.2V240.5M251.5 233.1V240.5M254.5 232.1V240.5M254.5 240.5V248.0M256.5 240.5V249.1M257.5 233.7V240.5M258.5 234.6V240.5M258.5 240.5V248.6M260.5 235.1V240.5M261.5 240.5V246.9M263.5 234.0V240.5M263.5 240.5V248.2M264.5 240.5V248.9M265.5 234.6V240.5M267.5 240.5V247.6M269.5 240.5V248.3M270.5 232.5V240.5M270.5 240.5V247.6M271.5 240.5V246.9M272.5 233.5V240.5M273.5 233.2V240.5M274.5 233.6V240.5M274.5 240.5V247.8M275.5 234.3V240.5M275.5 240.5V248.9M276.5 240.5V246.8M278.5 240.5V248.2M279.5 234.9V240.5M280.5 233.6V240.5M281.5 240.5V247.7M282.5 232.8V240.5M283.5 240.5V247.1M284.5 240.5V247.2M285.5 232.9V240.5M286.5 234.0V240.5M287.5 240.5V246.2M288.5 240.5V246.7M290.5 234.5V240.5M290.5 240.5V246.2M291.5 240.5V249.1M292.5 240.5V245.9M294.5 345.3V352.1M295.5 345.3V350.7M296.5 338.2V345.3M298.5 337.7V345.3M299.5 345.3V353.4M300.5 345.3V351.8M301.5 336.7V345.3M301.5 345.3V350.8M304.5 339.1V345.3M305.5 337.8V345.3M306.5 339.2V345.3M307.5 345.3V351.6M310.5 345.3V353.2M311.5 336.7V345.3M312.5 338.5V345.3M313.5 339.2V345.3M315.5 345.3V350.8M317.5 338.1V345.3M318.5 337.1V345.3M318.5 345.3V351.3M321.5 345.3V350.6M324.5 338.7V345.3M324.5 345.3V351.5M325.5 337.6V345.3M326.5 345.3V352.6M328.5 337.9V345.3M329.5 345.3V351.2M330.5 337.6V345.3M331.5 345.3V352.2M332.5 338.3V345.3M332.5 345.3V352.7M333.5 345.3V352.9M334.5 345.3V353.3M336.5 345.3V352.3M337.5 339.6V345.3M337.5 345.3V352.1M338.5 338.6V345.3M338.5 345.3V352.8M340.5 345.3V351.5M341.5 345.3V352.5M343.5 345.3V352.7M344.5 337.7V345.3M345.5 345.3V353.6M347.5 337.9V345.3M347.5 345.3V354.0M348.5 339.0V345.3M349.5 345.3V352.8M350.5 338.0V345.3M350.5 345.3V353.1M351.5 338.7V345.3M353.5 339.9V345.3M354.5 337.8V345.3M354.5 345.3V352.8M356.5 233.5V240.5M356.5 240.5V246.1M358.5 240.5V246.1M359.5 240.5V245.7M360.5 235.0V240.5M361.5 232.2V240.5M362.5 235.0V240.5M363.5 231.8V240.5M363.5 240.5V248.3M364.5 234.0V240.5M365.5 232.7V240.5M366.5 233.7V240.5M366.5 240.5V248.3M367.5 232.2V240.5M368.5 232.9V240.5M368.5 240.5V247.9M369.5 240.5V246.3M370.5 232.4V240.5M370.5 240.5V246.0M373.5 240.5V246.6M375.5 233.4V240.5M375.5 240.5V245.8M376.5 234.0V240.5M376.5 240.5V246.0M377.5 234.6V240.5M377.5 240.5V246.7M378.5 240.5V246.3M381.5 234.2V240.5M382.5 234.3V240.5M383.5 232.4V240.5M385.5 232.5V240.5M386.5 233.8V240.5M387.5 240.5V246.1M388.5 235.0V240.5M388.5 240.5V246.1M389.5 233.8V240.5M389.5 240.5V246.0M390.5 234.6V240.5M390.5 240.5V246.9M391.5 234.1V240.5M392.5 232.1V240.5M394.5 233.7V240.5M394.5 240.5V246.8M395.5 234.9V240.5M398.5 234.5V240.5M398.5 240.5V249.1M399.5 234.4V240.5M400.5 234.8V240.5M400.5 240.5V245.7M402.5 232.6V240.5M402.5 240.5V246.5M403.5 240.5V247.6M404.5 234.2V240.5M407.5 240.5V249.0M409.5 233.7V240.5M409.5 240.5V248.8M410.5 233.6V240.5M410.5 240.5V248.1M411.5 235.3V240.5M412.5 234.1V240.5M413.5 240.5V246.7M414.5 240.5V248.1M416.5 240.5V247.8M418.5 240.5V248.2M420.5 234.4V240.5M422.5 339.9V345.3M423.5 345.3V352.6M425.5 345.3V353.7M428.5 339.7V345.3M429.5 345.3V352.2M432.5 345.3V352.6M433.5 338.6V345.3M434.5 339.7V345.3M435.5 339.5V345.3M436.5 337.6V345.3M436.5 345.3V351.3M437.5 338.9V345.3M437.5 345.3V351.0M439.5 338.4V345.3M439.5 345.3V351.6M441.5 345.3V351.2M443.5 338.3V345.3M443.5 345.3V353.2M444.5 345.3V350.5M445.5 339.4V345.3M446.5 345.3V353.9M447.5 339.5V345.3M447.5 345.3V353.8M449.5 345.3V351.8M451.5 345.3V351.8M452.5 339.9V345.3M452.5 345.3V350.9M453.5 337.2V345.3M453.5 345.3V351.8M454.5 337.5V345.3M455.5 339.3V345.3M455.5 345.3V351.2M456.5 339.4V345.3M458.5 345.3V351.1M460.5 336.8V345.3M460.5 345.3V352.7M461.5 345.3V353.7M463.5 336.7V345.3M463.5 345.3V351.0M464.5 336.7V345.3M464.5 345.3V350.7M465.5 345.3V353.4M466.5 345.3V351.1M467.5 338.8V345.3M468.5 345.3V351.6M469.5 337.5V345.3M470.5 345.3V353.0M471.5 345.3V350.8M472.5 340.0V345.3M474.5 338.8V345.3M475.5 345.3V352.1M478.5 345.3V353.6M482.5 339.1V345.3M483.5 345.3V352.3M485.5 339.5V345.3M485.5 345.3V351.9M487.5 235.1V240.5M487.5 240.5V245.8M489.5 234.9V240.5M490.5 233.5V240.5M490.5 240.5V248.2M491.5 234.8V240.5M491.5 240.5V246.1M492.5 234.4V240.5M492.5 240.5V248.3M493.5 233.2V240.5M494.5 234.5V240.5M494.5 240.5V247.8M495.5 234.2V240.5M495.5 240.5V247.7M496.5 232.3V240.5M496.5 240.5V247.6M497.5 234.6V240.5M498.5 240.5V247.1M499.5 240.5V246.8M501.5 233.9V240.5M502.5 240.5V248.2M503.5 232.1V240.5M505.5 232.6V240.5M505.5 240.5V249.0M506.5 234.9V240.5M507.5 234.8V240.5M507.5 240.5V246.0M508.5 232.5V240.5M510.5 231.9V240.5M510.5 240.5V246.7M511.5 240.5V246.1M513.5 235.0V240.5M513.5 240.5V248.1M514.5 240.5V246.0M515.5 240.5V245.9M516.5 232.5V240.5M516.5 240.5V246.4M517.5 234.6V240.5M517.5 240.5V246.1M518.5 232.7V240.5M519.5 240.5V247.2M520.5 240.5V247.7M521.5 234.3V240.5M523.5 240.5V249.0M525.5 232.0V240.5M526.5 240.5V246.5M527.5 234.6V240.5M527.5 240.5V247.2M529.5 235.1V240.5M529.5 240.5V246.6M531.5 240.5V247.0M534.5 240.5V247.1M535.5 232.3V240.5M536.5 234.6V240.5M538.5 233.1V240.5M539.5 232.6V240.5M540.5 240.5V247.8M542.5 240.5V247.2M543.5 234.3V240.5M543.5 240.5V246.8M547.5 232.3V240.5M548.5 232.1V240.5M548.5 240.5V247.2M551.5 345.3V350.6M553.5 337.2V345.3M554.5 345.3V351.9M558.5 339.9V345.3M559.5 338.6V345.3M560.5 345.3V350.8M563.5 345.3V352.1M566.5 337.9V345.3M566.5 345.3V353.2M567.5 338.7V345.3M567.5 345.3V352.1M568.5 338.4V345.3M568.5 345.3V353.7M569.5 345.3V353.6M570.5 336.6V345.3M571.5 339.3V345.3M572.5 339.1V345.3M573.5 339.6V345.3M573.5 345.3V353.8M575.5 338.0V345.3M577.5 337.0V345.3M577.5 345.3V352.0M578.5 336.8V345.3M579.5 345.3V353.0M582.5 339.3V345.3M582.5 345.3V351.5M586.5 345.3V350.6M587.5 337.5V345.3M588.5 339.5V345.3M588.5 345.3V352.6M589.5 339.6V345.3M589.5 345.3V352.2M590.5 345.3V351.0M592.5 337.5V345.3M592.5 345.3V353.7M594.5 339.5V345.3M595.5 345.3V353.2M596.5 339.1V345.3M597.5 339.0V345.3M598.5 339.0V345.3M598.5 345.3V351.8M599.5 339.8V345.3M599.5 345.3V353.4M600.5 337.7V345.3M605.5 339.5V345.3M607.5 338.4V345.3M607.5 345.3V350.9M608.5 345.3V352.5M609.5 345.3V352.8M612.5 345.3V352.1M613.5 340.0V345.3M613.5 345.3V353.1M614.5 232.8V240.5M614.5 240.5V247.5M615.5 233.2V240.5M615.5 240.5V247.1M616.5 240.5V248.2M617.5 240.5V247.6M618.5 240.5V248.4M624.5 240.5V248.2M625.5 232.4V240.5M626.5 232.3V240.5M626.5 240.5V246.9M627.5 240.5V246.6M628.5 233.9V240.5M629.5 233.9V240.5M631.5 232.3V240.5M632.5 233.2V240.5M635.5 235.0V240.5M635.5 240.5V248.2M636.5 232.7V240.5M636.5 240.5V246.8M639.5 240.5V247.8M640.5 233.9V240.5M643.5 233.9V240.5M643.5 240.5V249.1M644.5 234.3V240.5M644.5 240.5V249.1M646.5 235.2V240.5M647.5 233.8V240.5M648.5 234.1V240.5M648.5 240.5V248.0M651.5 240.5V245.9M652.5 234.2V240.5M652.5 240.5V246.0M653.5 240.5V246.8M654.5 234.8V240.5M656.5 240.5V248.8M657.5 240.5V247.3M658.5 232.4V240.5M658.5 240.5V246.2M659.5 240.5V249.0M661.5 233.8V240.5M662.5 240.5V246.8M664.5 240.5V247.6M665.5 233.9V240.5M666.5 234.1V240.5M667.5 233.6V240.5M668.5 240.5V248.2M669.5 240.5V247.7M670.5 235.1V240.5M670.5 240.5V247.5M671.5 240.5V247.0M673.5 232.5V240.5M673.5 240.5V246.7M676.5 233.7V240.5M677.5 233.0V240.5M677.5 240.5V246.5M678.5 338.9V345.3M678.5 345.3V352.6M679.5 345.3V352.1M680.5 345.3V351.7" stroke="#00f0f0" stroke-width="1" fill="none" opacity="0.22"/><path d="M30.5 236.2V244.1M31.5 235.9V244.8M32.5 235.7V245.3M33.5 235.0V244.0M34.5 235.8V244.1M35.5 235.9V245.9M36.5 235.8V245.2M37.5 235.3V246.0M38.5 339.5V349.2M39.5 341.4V350.4M40.5 341.4V349.6M41.5 341.5V350.6M42.5 341.5V350.3M43.5 340.3V349.3M44.5 341.6V350.7M45.5 341.2V351.1M46.5 341.8V351.2M47.5 340.7V349.2M48.5 341.5V349.6M49.5 339.9V350.9M50.5 340.5V350.4M51.5 340.1V349.0M52.5 339.4V350.3M53.5 339.3V350.1M54.5 341.8V349.2M55.5 340.5V348.8M56.5 341.0V349.5M57.5 341.1V349.4M58.5 341.2V350.9M59.5 340.1V348.8M60.5 339.6V349.5M61.5 339.9V350.4M62.5 339.3V348.9M63.5 341.0V349.6M64.5 340.7V350.0M65.5 339.8V351.2M66.5 340.1V349.6M67.5 341.4V350.7M68.5 340.2V351.2M69.5 339.7V350.7M70.5 340.9V349.7M71.5 341.0V349.0M72.5 340.5V350.9M73.5 341.4V349.4M74.5 341.6V351.3M75.5 340.1V348.9M76.5 340.2V351.2M77.5 341.1V348.8M78.5 340.6V349.5M79.5 339.6V349.9M80.5 339.7V350.5M81.5 340.5V349.8M82.5 340.2V350.3M83.5 341.3V351.1M84.5 340.5V351.0M85.5 339.7V349.5M86.5 340.3V351.2M87.5 341.3V349.1M88.5 339.5V349.3M89.5 340.6V350.2M90.5 341.8V349.0M91.5 340.0V350.2M92.5 340.2V349.5M93.5 340.2V348.8M94.5 341.2V351.3M95.5 340.5V349.4M96.5 339.9V350.5M97.5 339.6V350.5M98.5 340.7V350.3M99.5 235.4V245.5M100.5 235.8V245.7M101.5 236.9V245.2M102.5 236.4V244.2M103.5 236.5V246.4M104.5 234.8V243.9M105.5 236.1V244.1M106.5 236.8V246.4M107.5 236.3V244.3M108.5 236.0V244.6M109.5 236.1V244.0M110.5 235.6V244.8M111.5 236.7V245.2M112.5 235.6V245.7M113.5 235.7V244.0M114.5 234.7V245.9M115.5 235.7V244.5M116.5 236.3V244.2M117.5 235.0V246.2M118.5 234.8V246.0M119.5 235.0V244.4M120.5 235.5V244.8M121.5 235.6V245.3M122.5 236.7V246.1M123.5 236.3V245.4M124.5 234.8V245.8M125.5 236.9V245.9M126.5 235.4V245.3M127.5 234.6V246.3M128.5 237.1V246.2M129.5 234.8V244.8M130.5 237.0V245.9M131.5 236.1V244.3M132.5 236.1V245.3M133.5 237.0V244.3M134.5 237.0V245.1M135.5 237.0V245.5M136.5 236.3V244.2M137.5 236.6V244.1M138.5 235.1V244.5M139.5 236.4V243.9M140.5 235.1V245.8M141.5 236.1V245.4M142.5 235.8V244.3M143.5 235.2V245.5M144.5 235.5V244.0M145.5 234.7V246.1M146.5 234.5V244.8M147.5 235.1V244.4M148.5 235.4V245.7M149.5 236.9V245.9M150.5 236.3V245.1M151.5 234.8V245.4M152.5 235.5V244.7M153.5 236.9V246.1M154.5 236.5V245.9M155.5 236.8V245.7M156.5 234.8V246.5M157.5 234.7V244.9M158.5 235.6V246.4M159.5 235.8V245.3M160.5 237.0V245.1M161.5 234.9V245.0M162.5 235.6V244.1M163.5 235.1V246.1M164.5 235.1V244.6M165.5 235.8V246.3M166.5 234.9V244.9M167.5 236.2V245.6M168.5 340.2V351.0M169.5 341.7V349.6M170.5 340.8V350.4M171.5 341.5V350.1M172.5 339.5V349.6M173.5 340.7V350.2M174.5 340.3V349.0M175.5 341.7V351.3M176.5 340.1V350.1M177.5 341.9V350.8M178.5 339.7V348.8M179.5 341.6V348.7M180.5 341.5V348.8M181.5 339.7V349.8M182.5 339.3V350.0M183.5 340.4V350.7M184.5 340.7V349.9M185.5 341.4V351.1M186.5 339.4V349.1M187.5 340.3V349.6M188.5 339.5V349.6M189.5 340.6V348.7M190.5 341.1V349.6M191.5 340.0V349.8M192.5 341.0V351.1M193.5 340.6V350.5M194.5 340.0V349.2M195.5 340.5V350.7M196.5 341.8V351.0M197.5 339.8V351.1M198.5 341.4V349.1M199.5 341.0V349.1M200.5 340.1V351.2M201.5 339.9V350.9M202.5 340.3V349.4M203.5 340.2V349.0M204.5 340.5V349.9M205.5 340.3V349.2M206.5 340.8V348.9M207.5 341.3V349.6M208.5 339.5V348.8M209.5 339.5V350.8M210.5 340.3V351.1M211.5 340.3V350.0M212.5 341.1V348.7M213.5 339.5V350.8M214.5 340.4V350.6M215.5 339.9V350.3M216.5 341.2V349.4M217.5 339.5V349.0M218.5 341.5V348.7M219.5 341.7V349.8M220.5 340.4V351.0M221.5 340.2V350.1M222.5 340.9V350.6M223.5 339.5V350.5M224.5 339.8V349.2M225.5 340.7V349.2M226.5 341.8V350.4M227.5 341.2V349.8M228.5 236.4V246.1M229.5 235.6V245.5M230.5 235.8V245.0M231.5 235.1V244.4M232.5 236.9V246.2M233.5 235.4V245.7M234.5 236.0V246.3M235.5 236.0V246.0M236.5 236.2V244.7M237.5 237.0V244.3M238.5 235.5V244.4M239.5 236.5V244.9M240.5 236.8V244.5M241.5 234.7V244.0M242.5 234.7V245.5M243.5 236.7V245.4M244.5 236.9V245.7M245.5 235.1V244.1M246.5 236.8V245.3M247.5 235.1V246.1M248.5 236.4V246.0M249.5 237.1V245.3M250.5 236.0V244.7M251.5 236.2V245.5M252.5 234.8V246.0M253.5 236.8V245.6M254.5 235.2V244.0M255.5 236.1V244.3M256.5 236.8V245.8M257.5 236.5V245.2M258.5 235.5V246.3M259.5 236.1V244.5M260.5 234.6V244.8M261.5 235.0V246.3M262.5 236.7V244.2M263.5 236.8V246.0M264.5 236.0V245.1M265.5 234.9V244.2M266.5 236.0V244.7M267.5 236.1V246.3M268.5 235.0V244.9M269.5 234.7V245.0M270.5 236.7V245.8M271.5 235.9V244.3M272.5 236.4V245.8M273.5 236.9V246.2M274.5 235.1V244.2M275.5 237.1V246.0M276.5 235.2V246.5M277.5 235.1V245.5M278.5 234.6V244.7M279.5 236.7V246.1M280.5 235.3V246.1M281.5 235.1V245.6M282.5 235.3V245.0M283.5 235.0V245.5M284.5 235.1V244.2M285.5 235.2V245.8M286.5 235.6V244.0M287.5 234.6V245.7M288.5 234.9V245.4M289.5 236.7V244.4M290.5 234.8V244.1M291.5 235.3V244.8M292.5 235.7V244.2M293.5 237.0V246.3M294.5 340.9V349.2M295.5 341.4V350.6M296.5 340.5V350.2M297.5 341.8V349.5M298.5 339.6V349.6M299.5 341.9V350.9M300.5 341.7V349.2M301.5 339.9V350.2M302.5 339.4V351.3M303.5 339.8V350.3M304.5 341.0V350.0M305.5 340.5V351.1M306.5 341.0V349.3M307.5 341.2V350.3M308.5 339.5V348.9M309.5 340.3V350.9M310.5 341.3V351.0M311.5 341.5V349.8M312.5 340.4V348.8M313.5 341.6V349.9M314.5 341.0V349.9M315.5 341.1V348.9M316.5 339.5V350.4M317.5 340.7V350.5M318.5 340.7V351.2M319.5 340.3V349.4M320.5 341.2V350.1M321.5 339.6V348.7M322.5 340.7V350.7M323.5 340.3V349.1M324.5 340.4V349.1M325.5 340.9V350.8M326.5 341.7V349.1M327.5 339.8V351.1M328.5 339.6V349.1M329.5 341.7V350.1M330.5 341.3V349.2M331.5 340.5V349.0M332.5 341.0V348.9M333.5 341.0V350.5M334.5 340.6V350.3M335.5 339.7V351.0M336.5 340.6V350.2M337.5 339.9V350.4M338.5 340.7V351.2M339.5 339.7V349.3M340.5 339.9V349.4M341.5 340.2V350.8M342.5 340.7V351.2M343.5 339.9V348.8M344.5 341.9V349.5M345.5 339.5V349.8M346.5 340.8V349.0M347.5 341.4V349.6M348.5 339.6V351.2M349.5 340.7V349.6M350.5 339.8V350.5M351.5 340.5V351.0M352.5 341.7V349.8M353.5 341.4V350.9M354.5 340.9V350.5M355.5 341.6V348.9M356.5 235.0V244.3M357.5 236.2V246.5M358.5 236.7V245.7M359.5 236.6V244.4M360.5 236.9V245.0M361.5 235.8V245.3M362.5 235.3V245.2M363.5 236.4V246.3M364.5 235.7V245.9M365.5 237.0V245.3M366.5 235.9V246.1M367.5 235.0V243.9M368.5 236.2V246.4M369.5 234.9V244.7M370.5 236.6V244.1M371.5 234.9V245.1M372.5 235.3V244.5M373.5 234.5V245.0M374.5 235.5V244.5M375.5 235.8V245.2M376.5 234.9V244.0M377.5 234.7V246.3M378.5 235.5V246.0M379.5 235.9V245.3M380.5 236.7V245.1M381.5 235.8V244.3M382.5 236.1V246.5M383.5 234.8V246.3M384.5 235.1V246.1M385.5 236.8V246.3M386.5 236.1V246.0M387.5 236.5V246.2M388.5 237.0V244.2M389.5 236.5V245.6M390.5 237.0V244.2M391.5 235.3V246.2M392.5 236.8V246.5M393.5 234.8V245.4M394.5 235.0V246.2M395.5 235.1V246.2M396.5 236.5V244.2M397.5 236.9V245.9M398.5 235.8V245.2M399.5 235.0V245.9M400.5 236.5V244.9M401.5 236.0V245.3M402.5 236.9V245.1M403.5 235.6V243.9M404.5 236.9V245.9M405.5 235.4V246.2M406.5 234.7V244.6M407.5 236.8V245.4M408.5 236.7V244.3M409.5 235.3V244.7M410.5 234.5V244.0M411.5 234.9V246.5M412.5 235.6V246.3M413.5 235.6V245.8M414.5 235.0V244.2M415.5 235.7V245.1M416.5 235.8V245.1M417.5 236.2V245.6M418.5 236.1V245.9M419.5 235.0V245.8M420.5 236.0V244.4M421.5 234.8V245.5M422.5 341.7V350.0M423.5 340.9V350.3M424.5 341.2V349.2M425.5 341.6V351.0M426.5 341.3V349.6M427.5 340.8V351.2M428.5 339.8V350.9M429.5 341.4V349.9M430.5 341.4V349.1M431.5 341.6V351.1M432.5 341.0V351.2M433.5 339.5V348.8M434.5 341.4V350.8M435.5 341.7V349.9M436.5 341.2V350.5M437.5 341.6V349.7M438.5 341.5V349.1M439.5 339.7V350.2M440.5 340.8V351.0M441.5 341.3V350.3M442.5 340.1V349.7M443.5 339.6V350.8M444.5 340.7V350.3M445.5 341.7V348.7M446.5 341.3V349.3M447.5 340.4V351.2M448.5 340.7V349.2M449.5 340.1V351.0M450.5 339.3V349.8M451.5 341.0V349.0M452.5 341.5V349.8M453.5 340.6V350.9M454.5 339.9V349.8M455.5 341.7V349.5M456.5 341.8V349.0M457.5 341.8V349.2M458.5 339.9V350.7M459.5 340.0V348.7M460.5 340.2V350.0M461.5 341.6V349.3M462.5 340.8V351.2M463.5 340.5V348.8M464.5 341.2V350.8M465.5 341.0V348.8M466.5 341.0V351.1M467.5 339.9V350.9M468.5 339.6V349.5M469.5 339.8V350.0M470.5 339.6V349.2M471.5 340.2V349.6M472.5 340.7V348.9M473.5 340.7V349.3M474.5 341.0V349.5M475.5 341.7V350.2M476.5 339.8V348.7M477.5 340.4V349.5M478.5 341.5V349.0M479.5 341.0V348.7M480.5 339.5V349.9M481.5 340.8V350.7M482.5 340.8V350.6M483.5 341.2V350.8M484.5 339.5V350.3M485.5 339.6V350.0M486.5 340.9V348.9M487.5 235.6V246.0M488.5 235.8V243.9M489.5 235.6V243.9M490.5 237.0V244.9M491.5 236.1V245.9M492.5 235.9V246.2M493.5 236.1V246.3M494.5 236.5V244.8M495.5 236.6V246.1M496.5 235.7V246.3M497.5 235.1V244.2M498.5 234.7V245.0M499.5 237.0V244.9M500.5 236.4V245.2M501.5 235.6V244.6M502.5 236.4V244.4M503.5 236.8V246.2M504.5 236.9V244.8M505.5 236.8V244.3M506.5 235.6V244.4M507.5 236.1V246.2M508.5 235.1V244.0M509.5 235.7V245.2M510.5 236.2V246.4M511.5 237.0V244.4M512.5 234.8V246.3M513.5 236.0V245.8M514.5 236.2V246.0M515.5 236.2V245.0M516.5 235.0V245.0M517.5 235.8V244.2M518.5 236.5V244.9M519.5 236.7V244.9M520.5 236.9V245.4M521.5 236.9V245.7M522.5 235.5V245.4M523.5 236.8V244.6M524.5 237.1V246.0M525.5 235.1V246.4M526.5 236.0V244.2M527.5 234.7V244.3M528.5 236.8V245.2M529.5 234.5V245.1M530.5 234.5V244.8M531.5 236.1V245.6M532.5 236.3V246.4M533.5 236.4V244.2M534.5 235.5V244.5M535.5 236.0V245.6M536.5 235.0V245.9M537.5 236.5V244.3M538.5 235.4V245.0M539.5 236.8V244.1M540.5 236.0V246.4M541.5 235.1V244.2M542.5 234.5V246.4M543.5 236.0V244.0M544.5 235.6V244.7M545.5 235.0V244.2M546.5 234.8V246.2M547.5 236.2V246.2M548.5 235.8V245.7M549.5 339.6V349.9M550.5 339.5V349.4M551.5 339.4V351.0M552.5 341.1V351.0M553.5 340.7V351.0M554.5 339.7V348.7M555.5 339.7V350.4M556.5 339.4V349.9M557.5 341.8V350.6M558.5 341.2V349.4M559.5 340.2V348.8M560.5 339.4V349.1M561.5 341.0V349.2M562.5 339.4V349.7M563.5 341.9V350.9M564.5 340.5V348.8M565.5 340.2V349.8M566.5 340.5V350.2M567.5 341.1V348.8M568.5 341.6V349.2M569.5 340.3V349.9M570.5 340.5V350.5M571.5 339.5V350.9M572.5 340.4V351.2M573.5 339.7V350.9M574.5 341.1V348.8M575.5 340.2V350.1M576.5 339.5V350.5M577.5 339.5V349.3M578.5 339.6V350.4M579.5 340.5V350.5M580.5 341.0V349.7M581.5 340.5V350.7M582.5 341.1V349.0M583.5 339.5V348.9M584.5 341.4V351.0M585.5 341.1V349.0M586.5 339.6V350.2M587.5 339.4V349.2M588.5 339.9V351.0M589.5 340.6V350.3M590.5 340.2V348.9M591.5 340.6V350.5M592.5 339.7V351.1M593.5 339.4V349.2M594.5 339.5V349.7M595.5 341.6V350.7M596.5 340.0V348.9M597.5 340.2V350.2M598.5 340.9V349.0M599.5 340.8V349.5M600.5 340.4V349.8M601.5 341.3V351.1M602.5 339.6V350.4M603.5 339.7V349.4M604.5 339.7V350.9M605.5 339.9V350.7M606.5 340.1V349.9M607.5 339.8V349.8M608.5 340.0V350.9M609.5 341.4V349.6M610.5 341.9V349.7M611.5 339.9V349.4M612.5 340.2V349.2M613.5 341.3V351.0M614.5 234.8V246.5M615.5 236.6V244.6M616.5 236.2V245.3M617.5 235.8V245.2M618.5 236.0V245.4M619.5 235.4V246.2M620.5 234.6V246.1M621.5 236.0V244.9M622.5 236.9V246.3M623.5 236.8V246.3M624.5 236.2V244.3M625.5 236.0V245.4M626.5 234.6V246.1M627.5 235.6V246.2M628.5 235.6V245.8M629.5 235.8V246.5M630.5 235.0V244.6M631.5 236.5V246.1M632.5 237.0V244.3M633.5 236.1V244.6M634.5 237.0V244.2M635.5 236.4V245.5M636.5 235.4V244.8M637.5 236.8V245.7M638.5 236.4V245.6M639.5 236.6V244.3M640.5 235.2V244.7M641.5 236.1V246.3M642.5 234.8V246.3M643.5 235.2V245.4M644.5 235.4V246.0M645.5 236.5V246.4M646.5 236.4V244.9M647.5 235.1V244.5M648.5 235.5V244.9M649.5 234.8V244.0M650.5 236.0V245.2M651.5 235.5V244.9M652.5 237.0V244.1M653.5 235.1V244.2M654.5 234.6V243.9M655.5 235.3V246.4M656.5 234.6V245.7M657.5 236.0V243.9M658.5 236.8V245.7M659.5 235.7V245.8M660.5 236.0V244.7M661.5 236.4V244.6M662.5 234.5V245.4M663.5 236.6V245.3M664.5 236.5V243.9M665.5 235.7V244.2M666.5 236.0V243.9M667.5 235.6V244.3M668.5 236.7V245.7M669.5 235.3V245.2M670.5 235.5V246.0M671.5 235.2V246.4M672.5 235.6V245.8M673.5 235.5V244.4M674.5 235.5V245.7M675.5 235.6V244.5M676.5 236.3V244.2M677.5 235.9V245.0M678.5 339.3V350.2M679.5 341.1V349.9M680.5 340.1V348.9" stroke="#00f0f0" stroke-width="1" fill="none" opacity="0.6"/><path d="M30.5 238.0V243.5M31.5 237.1V243.3M32.5 236.4V244.4M33.5 236.9V243.0M34.5 236.8V244.5M35.5 236.6V243.5M36.5 237.6V244.0M37.5 236.4V244.4M38.5 342.7V348.2M39.5 341.7V349.0M40.5 342.7V348.7M41.5 342.6V348.0M42.5 341.9V347.9M43.5 342.9V348.3M44.5 341.1V348.7M45.5 341.4V349.2M46.5 342.5V348.6M47.5 341.5V348.7M48.5 342.1V349.0M49.5 341.6V348.2M50.5 342.8V348.0M51.5 342.4V348.6M52.5 341.9V349.4M53.5 342.4V348.1M54.5 342.7V348.5M55.5 342.6V348.4M56.5 342.1V348.2M57.5 342.8V349.1M58.5 341.5V347.7M59.5 341.7V349.5M60.5 341.7V347.8M61.5 342.6V349.2M62.5 342.3V347.7M63.5 342.9V348.0M64.5 341.6V348.0M65.5 342.8V347.9M66.5 342.5V347.8M67.5 341.8V349.4M68.5 342.5V349.0M69.5 342.2V348.4M70.5 341.7V349.0M71.5 341.3V349.2M72.5 341.9V348.5M73.5 342.6V348.1M74.5 342.1V348.5M75.5 341.6V348.7M76.5 342.8V347.8M77.5 341.5V348.2M78.5 342.4V348.3M79.5 341.3V349.3M80.5 341.2V348.0M81.5 341.2V348.4M82.5 342.3V348.9M83.5 341.6V349.2M84.5 342.6V348.1M85.5 342.0V349.1M86.5 342.9V349.4M87.5 341.9V348.7M88.5 342.5V349.0M89.5 342.5V349.1M90.5 342.7V349.0M91.5 342.0V348.7M92.5 342.3V348.7M93.5 341.3V348.4M94.5 341.7V348.7M95.5 342.8V349.4M96.5 342.1V349.4M97.5 342.9V348.9M98.5 341.5V348.0M99.5 236.5V244.6M100.5 237.1V243.7M101.5 238.1V243.1M102.5 237.5V243.8M103.5 236.3V243.3M104.5 237.7V244.7M105.5 237.6V244.3M106.5 237.0V243.7M107.5 236.7V243.2M108.5 236.3V243.8M109.5 237.1V243.3M110.5 237.1V243.0M111.5 237.2V243.4M112.5 237.4V244.0M113.5 238.0V244.4M114.5 237.3V244.5M115.5 236.8V243.9M116.5 236.6V244.1M117.5 237.0V243.0M118.5 236.6V243.2M119.5 237.9V243.2M120.5 236.8V244.7M121.5 236.8V244.0M122.5 236.3V244.1M123.5 237.2V244.0M124.5 236.3V244.6M125.5 238.0V244.0M126.5 236.7V243.4M127.5 236.7V244.1M128.5 236.5V243.3M129.5 237.0V244.1M130.5 236.4V244.6M131.5 237.5V243.9M132.5 236.6V244.3M133.5 237.5V244.5M134.5 237.8V244.7M135.5 236.3V244.2M136.5 238.1V243.5M137.5 238.0V244.4M138.5 238.0V244.5M139.5 237.6V243.9M140.5 237.8V243.6M141.5 236.9V244.3M142.5 236.7V243.5M143.5 236.9V244.1M144.5 237.3V244.3M145.5 236.5V244.1M146.5 236.6V243.1M147.5 236.6V244.3M148.5 237.3V243.1M149.5 237.6V242.9M150.5 237.9V242.9M151.5 237.3V244.2M152.5 236.4V243.3M153.5 237.9V244.4M154.5 237.5V244.2M155.5 236.7V243.9M156.5 237.4V244.0M157.5 238.0V243.6M158.5 236.3V242.9M159.5 237.0V244.5M160.5 237.9V244.1M161.5 236.8V243.1M162.5 237.2V243.7M163.5 237.6V243.7M164.5 237.1V243.7M165.5 237.3V243.4M166.5 237.9V243.9M167.5 237.6V244.0M168.5 342.4V348.9M169.5 342.8V349.3M170.5 342.1V349.2M171.5 341.8V348.2M172.5 341.7V348.6M173.5 342.2V348.6M174.5 342.4V348.2M175.5 342.6V348.3M176.5 342.6V348.4M177.5 341.4V348.0M178.5 342.9V349.1M179.5 341.1V348.0M180.5 342.2V348.7M181.5 342.1V348.7M182.5 341.2V348.2M183.5 341.2V348.4M184.5 342.3V348.7M185.5 342.7V348.6M186.5 341.6V348.3M187.5 342.2V349.5M188.5 342.8V347.8M189.5 341.5V348.2M190.5 341.3V348.3M191.5 341.8V348.3M192.5 341.5V349.1M193.5 342.2V348.9M194.5 341.7V349.1M195.5 341.8V348.3M196.5 342.0V348.0M197.5 342.5V348.3M198.5 342.3V349.0M199.5 342.7V348.4M200.5 342.1V347.9M201.5 342.7V349.1M202.5 342.1V349.2M203.5 341.8V347.9M204.5 341.2V348.8M205.5 341.1V349.3M206.5 342.3V349.3M207.5 342.6V348.7M208.5 341.4V349.4M209.5 341.7V348.1M210.5 342.9V348.8M211.5 342.1V348.9M212.5 342.6V349.3M213.5 341.3V348.9M214.5 342.2V348.0M215.5 341.4V349.4M216.5 342.3V348.4M217.5 341.6V349.4M218.5 341.2V349.3M219.5 341.8V349.4M220.5 342.9V348.1M221.5 341.2V348.6M222.5 342.2V348.1M223.5 342.4V348.8M224.5 341.7V349.1M225.5 341.9V349.0M226.5 342.5V348.1M227.5 341.5V348.1M228.5 236.9V243.2M229.5 236.8V244.6M230.5 237.2V243.1M231.5 236.8V243.9M232.5 237.9V243.8M233.5 237.1V243.4M234.5 237.5V243.1M235.5 236.9V244.5M236.5 237.8V244.0M237.5 237.4V244.0M238.5 236.7V244.1M239.5 238.0V244.6M240.5 236.6V243.8M241.5 237.6V243.5M242.5 236.4V244.0M243.5 236.9V244.3M244.5 237.9V243.8M245.5 237.3V243.7M246.5 237.0V243.7M247.5 236.7V243.5M248.5 237.9V243.4M249.5 236.9V243.5M250.5 237.6V243.2M251.5 237.7V243.8M252.5 237.1V243.9M253.5 237.9V243.6M254.5 236.7V243.3M255.5 237.3V243.7M256.5 237.7V243.4M257.5 237.7V243.4M258.5 237.2V244.6M259.5 238.0V244.2M260.5 237.1V243.0M261.5 236.8V243.8M262.5 237.3V243.3M263.5 237.7V243.1M264.5 238.1V244.6M265.5 236.5V244.1M266.5 237.7V243.6M267.5 236.6V244.4M268.5 236.5V243.4M269.5 237.1V243.4M270.5 236.4V243.4M271.5 237.8V243.1M272.5 237.6V243.3M273.5 237.7V243.0M274.5 237.3V243.7M275.5 237.7V244.6M276.5 236.7V243.8M277.5 236.3V244.4M278.5 237.7V243.6M279.5 237.1V244.0M280.5 237.8V244.6M281.5 237.5V244.4M282.5 237.3V243.0M283.5 236.4V243.1M284.5 236.8V244.0M285.5 237.7V243.8M286.5 237.1V244.1M287.5 237.1V243.4M288.5 236.6V244.3M289.5 238.0V243.8M290.5 237.8V243.7M291.5 236.3V243.5M292.5 237.5V242.9M293.5 236.9V244.2M294.5 341.3V348.2M295.5 342.5V348.6M296.5 341.2V348.8M297.5 342.6V348.5M298.5 341.5V349.5M299.5 341.7V349.2M300.5 341.4V349.2M301.5 342.6V348.0M302.5 342.7V348.7M303.5 341.6V349.2M304.5 341.3V348.0M305.5 342.0V347.9M306.5 341.6V348.0M307.5 342.7V348.6M308.5 341.7V348.3M309.5 341.2V347.9M310.5 342.7V349.3M311.5 342.7V348.8M312.5 341.5V348.6M313.5 342.5V347.8M314.5 342.5V349.4M315.5 341.1V349.2M316.5 342.2V349.1M317.5 341.4V349.3M318.5 341.5V348.8M319.5 342.3V349.1M320.5 342.8V348.5M321.5 342.2V349.0M322.5 341.2V349.1M323.5 341.4V349.0M324.5 342.8V348.2M325.5 341.6V347.9M326.5 342.3V348.9M327.5 342.2V348.3M328.5 342.9V349.1M329.5 341.8V349.3M330.5 342.4V349.3M331.5 341.8V348.3M332.5 341.1V347.8M333.5 342.3V348.8M334.5 342.8V348.6M335.5 342.5V348.5M336.5 342.9V349.0M337.5 341.8V348.2M338.5 341.9V347.9M339.5 342.0V348.5M340.5 342.2V348.2M341.5 342.6V348.3M342.5 342.7V347.8M343.5 342.5V348.5M344.5 342.3V349.3M345.5 341.6V348.9M346.5 341.5V348.4M347.5 342.2V348.3M348.5 341.6V347.8M349.5 341.5V347.7M350.5 341.2V349.5M351.5 342.6V348.7M352.5 341.8V348.1M353.5 341.2V349.3M354.5 342.1V347.8M355.5 342.2V349.4M356.5 237.3V244.1M357.5 236.6V243.5M358.5 237.4V244.1M359.5 237.1V244.6M360.5 236.9V243.8M361.5 236.8V244.0M362.5 237.7V244.0M363.5 237.3V244.2M364.5 237.0V244.2M365.5 237.8V243.4M366.5 236.5V244.6M367.5 237.3V242.9M368.5 238.1V243.3M369.5 238.0V244.7M370.5 238.0V243.0M371.5 237.7V243.0M372.5 236.7V243.9M373.5 237.6V243.1M374.5 237.2V244.2M375.5 237.8V244.5M376.5 236.9V243.7M377.5 236.9V243.2M378.5 236.7V244.5M379.5 236.9V244.2M380.5 237.2V243.9M381.5 236.8V244.0M382.5 238.1V243.4M383.5 236.9V243.0M384.5 237.5V244.0M385.5 236.4V243.6M386.5 237.5V243.8M387.5 236.9V244.1M388.5 237.9V243.0M389.5 237.4V244.1M390.5 238.1V244.0M391.5 237.4V244.5M392.5 236.6V243.9M393.5 237.5V244.5M394.5 237.0V244.7M395.5 237.1V244.4M396.5 237.5V243.1M397.5 237.4V243.3M398.5 238.1V243.1M399.5 236.8V244.2M400.5 236.5V243.1M401.5 237.8V244.2M402.5 236.5V243.3M403.5 236.5V244.6M404.5 237.1V243.4M405.5 238.1V244.4M406.5 236.4V243.5M407.5 238.1V243.6M408.5 236.5V244.2M409.5 236.9V243.1M410.5 236.5V244.0M411.5 238.0V243.5M412.5 237.4V244.7M413.5 237.8V244.4M414.5 237.5V243.1M415.5 236.5V243.5M416.5 236.9V244.5M417.5 236.4V243.4M418.5 237.8V243.2M419.5 237.9V243.3M420.5 237.9V243.7M421.5 237.5V244.2M422.5 342.8V349.0M423.5 342.1V348.7M424.5 342.2V348.7M425.5 342.5V348.3M426.5 341.8V349.0M427.5 342.5V348.9M428.5 341.5V347.8M429.5 342.3V348.2M430.5 342.8V348.7M431.5 342.3V348.4M432.5 341.3V347.9M433.5 342.7V348.7M434.5 342.7V349.4M435.5 342.8V347.9M436.5 342.2V348.3M437.5 341.4V348.5M438.5 342.5V348.4M439.5 341.9V348.1M440.5 342.0V347.8M441.5 342.7V349.2M442.5 342.2V349.2M443.5 342.3V348.1M444.5 342.2V349.3M445.5 341.6V348.1M446.5 342.6V348.5M447.5 341.6V348.6M448.5 341.6V348.3M449.5 342.5V349.1M450.5 341.1V349.0M451.5 341.2V348.4M452.5 342.8V349.4M453.5 341.9V349.3M454.5 342.0V349.5M455.5 342.8V349.3M456.5 342.0V349.5M457.5 341.1V347.8M458.5 342.2V348.8M459.5 341.1V349.3M460.5 341.8V348.7M461.5 342.7V347.7M462.5 341.2V348.2M463.5 342.9V347.9M464.5 341.4V348.4M465.5 342.4V348.1M466.5 341.8V349.4M467.5 342.9V348.0M468.5 341.9V349.4M469.5 342.8V349.3M470.5 342.3V348.5M471.5 341.5V348.1M472.5 342.2V348.8M473.5 342.3V349.3M474.5 342.8V348.3M475.5 341.3V348.0M476.5 341.5V349.1M477.5 341.3V347.7M478.5 342.5V348.8M479.5 342.0V347.9M480.5 342.3V348.2M481.5 342.7V348.7M482.5 342.3V347.8M483.5 341.6V348.1M484.5 341.4V348.4M485.5 342.8V347.8M486.5 342.6V348.1M487.5 237.7V244.5M488.5 236.5V244.1M489.5 238.0V244.1M490.5 236.8V244.4M491.5 236.7V243.4M492.5 236.6V243.9M493.5 238.0V243.1M494.5 237.8V243.2M495.5 237.8V243.5M496.5 237.4V244.0M497.5 237.4V243.2M498.5 237.2V244.0M499.5 236.8V244.0M500.5 238.0V244.3M501.5 237.8V244.5M502.5 236.8V244.3M503.5 236.5V243.3M504.5 237.5V244.5M505.5 237.0V244.5M506.5 237.4V244.0M507.5 237.2V243.8M508.5 236.4V243.7M509.5 236.5V243.2M510.5 236.4V243.4M511.5 238.1V243.3M512.5 236.4V244.4M513.5 238.1V243.5M514.5 236.8V243.2M515.5 236.8V243.2M516.5 236.4V242.9M517.5 236.7V243.0M518.5 236.3V243.4M519.5 237.7V243.1M520.5 236.4V243.7M521.5 237.4V244.2M522.5 236.8V243.2M523.5 237.8V244.6M524.5 237.3V244.1M525.5 237.6V243.6M526.5 237.6V243.0M527.5 237.7V244.2M528.5 236.5V243.9M529.5 237.5V244.0M530.5 237.4V244.4M531.5 237.2V244.1M532.5 237.9V244.1M533.5 237.5V243.4M534.5 236.4V243.8M535.5 237.1V243.9M536.5 237.2V243.9M537.5 237.1V243.4M538.5 236.6V243.3M539.5 237.0V244.3M540.5 236.5V244.1M541.5 237.1V244.3M542.5 237.4V243.7M543.5 237.0V244.3M544.5 238.0V243.5M545.5 237.6V243.7M546.5 236.9V243.9M547.5 237.4V243.5M548.5 236.6V243.0M549.5 341.5V348.0M550.5 342.2V348.4M551.5 341.9V347.7M552.5 342.5V348.0M553.5 341.9V348.7M554.5 342.5V347.8M555.5 341.5V348.4M556.5 341.9V349.1M557.5 342.5V347.9M558.5 341.4V347.7M559.5 342.7V348.8M560.5 342.9V348.7M561.5 341.8V348.2M562.5 342.7V349.5M563.5 342.8V348.5M564.5 341.9V347.8M565.5 342.5V349.5M566.5 342.8V349.3M567.5 342.1V348.8M568.5 342.1V348.8M569.5 341.7V349.2M570.5 341.4V348.5M571.5 342.5V348.1M572.5 341.8V348.1M573.5 341.8V348.6M574.5 342.5V348.1M575.5 341.8V349.3M576.5 342.7V348.1M577.5 341.7V348.7M578.5 341.5V348.8M579.5 342.7V347.8M580.5 341.2V348.0M581.5 342.9V349.2M582.5 341.8V347.8M583.5 341.7V348.6M584.5 341.8V348.6M585.5 341.6V349.3M586.5 342.4V348.0M587.5 341.2V348.2M588.5 341.7V347.9M589.5 342.2V349.0M590.5 341.2V349.0M591.5 341.9V347.8M592.5 342.7V349.5M593.5 341.9V348.6M594.5 342.6V349.2M595.5 341.2V348.4M596.5 341.6V348.0M597.5 342.6V349.1M598.5 342.4V349.1M599.5 341.2V349.4M600.5 342.0V348.0M601.5 341.5V349.0M602.5 342.4V349.3M603.5 341.6V348.1M604.5 342.5V349.3M605.5 341.2V348.4M606.5 341.5V348.6M607.5 342.8V348.3M608.5 341.5V349.1M609.5 341.7V348.4M610.5 342.6V349.4M611.5 341.8V348.0M612.5 341.8V349.2M613.5 342.5V348.2M614.5 237.7V244.2M615.5 237.7V242.9M616.5 237.8V243.5M617.5 237.4V243.7M618.5 236.7V244.3M619.5 238.0V243.4M620.5 236.7V244.4M621.5 236.9V244.6M622.5 237.0V244.2M623.5 236.8V243.0M624.5 237.0V244.6M625.5 236.6V243.1M626.5 237.8V244.5M627.5 237.8V243.1M628.5 237.0V243.8M629.5 237.4V243.8M630.5 236.8V242.9M631.5 237.0V244.2M632.5 237.3V243.6M633.5 237.9V243.8M634.5 236.9V243.1M635.5 237.3V243.0M636.5 237.9V243.1M637.5 236.6V243.8M638.5 238.0V243.4M639.5 236.7V244.2M640.5 236.8V243.0M641.5 236.7V243.8M642.5 236.7V243.3M643.5 237.4V243.5M644.5 237.3V244.5M645.5 238.0V243.3M646.5 237.1V243.9M647.5 237.3V244.0M648.5 236.7V243.4M649.5 236.5V244.0M650.5 237.6V244.3M651.5 237.8V243.6M652.5 237.8V244.0M653.5 236.8V244.6M654.5 236.3V243.5M655.5 236.7V243.7M656.5 238.1V244.5M657.5 236.4V243.2M658.5 237.9V243.6M659.5 236.4V243.1M660.5 236.4V244.4M661.5 236.6V243.2M662.5 237.0V243.4M663.5 237.6V244.6M664.5 236.7V244.0M665.5 236.5V243.1M666.5 237.8V243.4M667.5 237.4V243.0M668.5 237.0V243.3M669.5 238.1V243.6M670.5 237.0V243.3M671.5 236.6V243.6M672.5 236.8V243.2M673.5 237.1V244.1M674.5 237.4V243.0M675.5 236.3V244.5M676.5 236.5V244.3M677.5 237.9V243.1M678.5 342.2V348.0M679.5 342.3V349.0M680.5 341.1V348.3" stroke="#00f0f0" stroke-width="1" fill="none"/></g><path d="M674 294.3L678.2 290.6V297.9z" fill="#00e8e8"/><rect x="678" y="293.4" width="3" height="1.8" fill="#00a8a8"/></svg>
<div class="t" style="left:16px;top:-0.7px;height:11px;line-height:11px;font-family:'Liberation Serif',serif;font-weight:bold;font-size:13px;color:#5800a0;-webkit-text-stroke:0.3px #5800a0;letter-spacing:-0.2px">Tek</div>
<div class="t" style="left:38px;top:0px;height:11px;line-height:11px;font-weight:bold;font-size:11px;color:#e8e8f4;">Stop</div>

<div class="box" style="left:29px;top:424px;width:362px;height:14px;"></div>
<div class="a" style="left:29px;top:438px;width:362px;height:1px;background:#7898d4"></div>
<div class="box" style="left:29px;top:439px;width:362px;height:60px"></div>
<div class="box" style="left:397px;top:436px;width:96px;height:26px;border-color:#b0b0bc"></div>
<div class="box" style="left:499px;top:436px;width:70px;height:26px;border-color:#b0b0bc"></div>
<div class="box" style="left:574px;top:436px;width:108px;height:25px;border-color:#b0b0bc"></div>
<div class="box" style="left:608px;top:474px;width:74px;height:25px;border-color:#b0b0bc"></div>
<svg width="700" height="500" style="position:absolute;left:0;top:0">
<path d="M199.6 1.5Q198.6 5 199.6 9.5" stroke="#b8a8a8" stroke-width="1.6" fill="none"/>
<path d="M510.4 1.5Q511.4 5 510.4 9.5" stroke="#b8a8a8" stroke-width="1.6" fill="none"/>
<path d="M353 0.5H358L356.8 2.5V3.2Q358.2 3.8 358.2 5.5V9.8H352.8V5.5Q352.8 3.8 354.2 3.2V2.5Z" fill="#f0a000"/>
<rect x="355" y="4" width="1.2" height="5.2" fill="#000"/>
<path d="M352.2 10.6H359.6L355.9 15Z" fill="#f0a000"/>
<path d="M351.5 16.8Q351.5 15.2 355.8 15.2Q360 15.2 360 16.8V23.6L355.8 25.8L351.5 23.6Z" fill="#f0a000"/>
<rect x="352.8" y="16.9" width="6" height="1.3" fill="#000"/>
<rect x="355" y="16.9" width="1.4" height="6.4" fill="#000"/>
<path d="M17.5 217.5H24.5L28.8 222.5L24.5 227.5H17.5Q16.5 227.5 16.5 226.5V218.5Q16.5 217.5 17.5 217.5Z" fill="#000" stroke="#f0e000" stroke-width="1"/>
<path d="M19.6 219.6H21.4V225.6H20.2V221H19.4Z" fill="#f0f000"/>
<path d="M17 342H24.5L29 347.3L24.5 352.6H17Q16 352.6 16 351.6V343Q16 342 17 342Z" fill="#00e4ec"/>
<path d="M24.5 352.6L29 347.3" stroke="#102040" stroke-width="0.8" fill="none"/>
<text x="19.2" y="351" font-family="Liberation Sans" font-weight="bold" font-size="10" fill="#000">2</text>
<path d="M399.5 451.5Q399.5 450 401 450H406Q407.5 450 407.5 451.5V457Q407.5 458.5 406 458.5H401Q399.5 458.5 399.5 457Z" fill="#f0a000"/>
<rect x="401" y="451.8" width="5" height="1.3" fill="#000"/>
<rect x="402.9" y="451.8" width="1.3" height="5.5" fill="#000"/>
<path d="M408 454.3H413M411 452.3L413.5 454.3L411 456.3" stroke="#f0a000" stroke-width="1.1" fill="none"/>
<path d="M415 452H422.4L418.7 456.4Z" fill="#f0a000"/>
<path d="M620.3 446.3H622.6C623.8 446.3 624.2 440.6 626.2 440.6H628.8" stroke="#e8e8ec" stroke-width="1.4" fill="none"/>
</svg>
<svg width="700" height="500" style="position:absolute;left:0;top:0"><rect x="33" y="426" width="17" height="11" rx="5.5" ry="5.5" fill="#f0f000"/><path d="M41.1 428.0h1.7v6.2h-1.7v-4.6l-1.3 0.6v-1.1z" fill="#000"/><rect x="123" y="427" width="17" height="10" rx="5.0" ry="5.0" fill="#00e4ec"/><text x="128.2" y="435.4" font-family="Liberation Sans" font-weight="bold" font-size="10.5" fill="#000">2</text><rect x="33" y="453" width="17" height="10" rx="5.0" ry="5.0" fill="#f0f000"/><path d="M41.1 455.0h1.7v6.2h-1.7v-4.6l-1.3 0.6v-1.1z" fill="#000"/><rect x="33" y="465" width="17" height="10" rx="5.0" ry="5.0" fill="#f0f000"/><path d="M41.1 467.0h1.7v6.2h-1.7v-4.6l-1.3 0.6v-1.1z" fill="#000"/><rect x="33" y="476" width="17" height="10" rx="5.0" ry="5.0" fill="#00e4ec"/><text x="38.2" y="484.4" font-family="Liberation Sans" font-weight="bold" font-size="10.5" fill="#000">2</text><rect x="33" y="488" width="17" height="10" rx="5.0" ry="5.0" fill="#00e4ec"/><text x="38.2" y="496.4" font-family="Liberation Sans" font-weight="bold" font-size="10.5" fill="#000">2</text><rect x="595" y="438.5" width="17" height="10.5" rx="5.25" ry="5.25" fill="#00e4ec"/><text x="600.2" y="447.4" font-family="Liberation Sans" font-weight="bold" font-size="10.5" fill="#000">2</text></svg>
<div class="t" style="left:60.7px;top:429.0px;letter-spacing:0.82px;color:#f0f000">2.00 V</div><div class="t" style="left:151.5px;top:429.0px;letter-spacing:0.72px;color:#00e4ec">2.00 V</div><div class="t" style="left:119.0px;top:443.0px;letter-spacing:0.48px;color:#e8e8ec">Value</div><div class="t" style="left:176.6px;top:443.0px;letter-spacing:0.47px;color:#e8e8ec">Mean</div><div class="t" style="left:230.8px;top:443.0px;letter-spacing:0.80px;color:#e8e8ec">Min</div><div class="t" style="left:283.8px;top:443.0px;letter-spacing:0.10px;color:#e8e8ec">Max</div><div class="t" style="left:337.0px;top:443.0px;letter-spacing:0.33px;color:#e8e8ec">Std Dev</div><div class="t" style="left:55.4px;top:455.0px;letter-spacing:0.07px;color:#f0f000">Freq</div><div class="t" style="left:119.4px;top:455.0px;letter-spacing:0.83px;color:#f0f000">2.519kHz</div><div class="t" style="left:176.6px;top:455.0px;letter-spacing:0.92px;color:#f0f000">2.519k</div><div class="t" style="left:230.8px;top:455.0px;letter-spacing:0.92px;color:#f0f000">2.519k</div><div class="t" style="left:283.8px;top:455.0px;letter-spacing:0.92px;color:#f0f000">2.519k</div><div class="t" style="left:337.0px;top:455.0px;letter-spacing:1.00px;color:#f0f000">0.000</div><div class="t" style="left:55.4px;top:467.0px;letter-spacing:0.88px;color:#f0f000">+Duty</div><div class="t" style="left:119.4px;top:467.0px;letter-spacing:0.48px;color:#f0f000">52.38 %</div><div class="t" style="left:176.6px;top:467.0px;letter-spacing:1.00px;color:#f0f000">52.38</div><div class="t" style="left:230.8px;top:467.0px;letter-spacing:1.00px;color:#f0f000">52.38</div><div class="t" style="left:283.8px;top:467.0px;letter-spacing:1.00px;color:#f0f000">52.38</div><div class="t" style="left:337.0px;top:467.0px;letter-spacing:1.00px;color:#f0f000">0.000</div><div class="t" style="left:55.4px;top:479.0px;letter-spacing:0.07px;color:#00e4ec">Freq</div><div class="t" style="left:119.4px;top:479.0px;letter-spacing:0.83px;color:#00e4ec">2.507kHz</div><div class="t" style="left:176.6px;top:479.0px;letter-spacing:0.92px;color:#00e4ec">2.507k</div><div class="t" style="left:230.8px;top:479.0px;letter-spacing:0.92px;color:#00e4ec">2.507k</div><div class="t" style="left:283.8px;top:479.0px;letter-spacing:0.92px;color:#00e4ec">2.507k</div><div class="t" style="left:337.0px;top:479.0px;letter-spacing:1.00px;color:#00e4ec">0.000</div><div class="t" style="left:55.4px;top:490.0px;letter-spacing:0.88px;color:#00e4ec">+Duty</div><div class="t" style="left:119.4px;top:490.0px;letter-spacing:0.48px;color:#00e4ec">52.70 %</div><div class="t" style="left:176.6px;top:490.0px;letter-spacing:1.00px;color:#00e4ec">52.70</div><div class="t" style="left:230.8px;top:490.0px;letter-spacing:1.00px;color:#00e4ec">52.70</div><div class="t" style="left:283.8px;top:490.0px;letter-spacing:1.00px;color:#00e4ec">52.70</div><div class="t" style="left:337.0px;top:490.0px;letter-spacing:1.00px;color:#00e4ec">0.000</div><div class="t" style="left:400.9px;top:441.0px;letter-spacing:0.78px;color:#e8e8ec">200µs</div><div class="t" style="left:425.7px;top:451.5px;letter-spacing:0.67px;color:#f0a000">0.00000 s</div><div class="t" style="left:502.9px;top:441.0px;letter-spacing:0.99px;color:#e8e8ec">50.0MS/s</div><div class="t" style="left:502.9px;top:451.5px;letter-spacing:0.76px;color:#e8e8ec">100k points</div><div class="t" style="left:643.0px;top:441.0px;letter-spacing:0.78px;color:#e8e8ec">2.52 V</div><div class="t" style="left:619.0px;top:479.0px;letter-spacing:0.88px;color:#e8e8ec">7 Jul  2010</div><div class="t" style="left:613.3px;top:489.0px;letter-spacing:0.73px;color:#e8e8ec">16:30:48</div>
</body></html>
